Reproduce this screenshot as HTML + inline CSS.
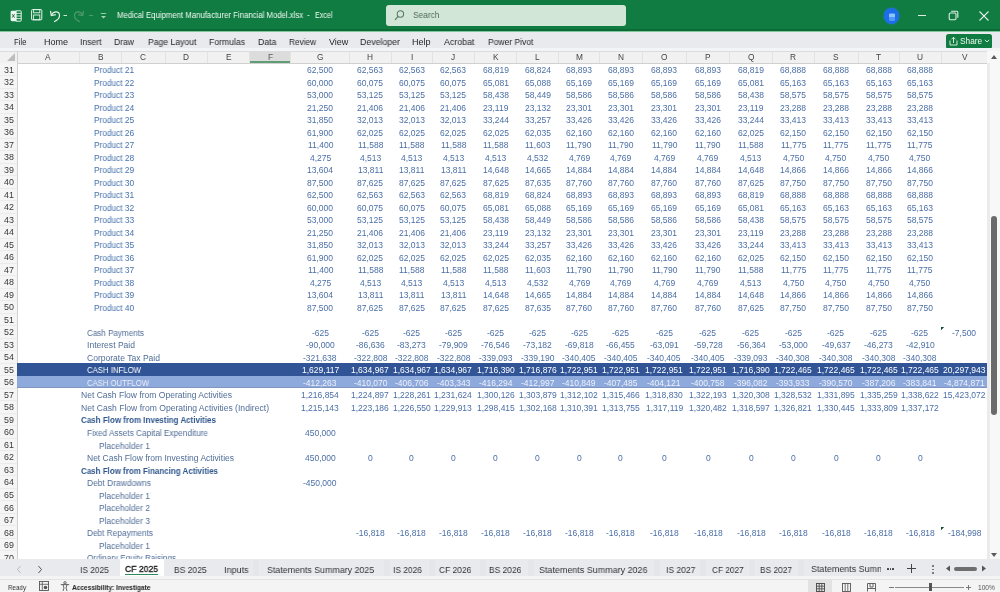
<!DOCTYPE html>
<html><head><meta charset="utf-8"><style>
*{margin:0;padding:0;box-sizing:border-box}
html,body{width:1000px;height:592px;overflow:hidden;background:#fff;font-family:"Liberation Sans",sans-serif}
.a{position:absolute}
.x{position:absolute;white-space:nowrap;will-change:transform}
</style></head><body>

<div id="root" class="a" style="left:0;top:0;width:1000px;height:592px;filter:blur(0.3px)">
<div class="a" style="left:0;top:0;width:1000px;height:31px;background:#107c41"></div>
<div class="a" style="left:0;top:29px;width:1000px;height:1.5px;background:#0c6a37"></div>
<div class="a" style="left:385.5px;top:5px;width:240px;height:20.5px;background:#d2e6d8;border-radius:3px"></div>
<svg class="a" style="left:393px;top:8px" width="12" height="14" viewBox="0 0 12 14"><circle cx="7.4" cy="6" r="3.2" fill="none" stroke="#587c63" stroke-width="1.1"/><line x1="5.1" y1="8.3" x2="2" y2="11.8" stroke="#587c63" stroke-width="1.2"/></svg>
<div class="x" style="left:412.80px;top:10.05px;font-size:9.00px;line-height:10.053px;color:#4d6b57;transform:scaleX(0.9258);transform-origin:0 0;">Search</div>
<div class="x" style="left:117.20px;top:11.12px;font-size:8.60px;line-height:9.606px;color:#f4faf6;transform:scaleX(0.9043);transform-origin:0 0;">Medical Equipment Manufacturer Financial Model.xlsx</div>
<div class="x" style="left:307.00px;top:11.12px;font-size:8.60px;line-height:9.606px;color:#d8ecdf;">-</div>
<div class="x" style="left:315.00px;top:11.12px;font-size:8.60px;line-height:9.606px;color:#f4faf6;transform:scaleX(0.8322);transform-origin:0 0;">Excel</div>
<svg class="a" style="left:10px;top:9.5px" width="12" height="12" viewBox="0 0 12 12">
<rect x="5.6" y="0.8" width="5.6" height="10.4" rx="0.6" fill="none" stroke="#e4f4ea" stroke-width="1"/>
<path d="M5.6 3.4 H11.2 M5.6 6 H11.2 M5.6 8.6 H11.2" stroke="#e4f4ea" stroke-width="0.9"/>
<path d="M2 0.8 H6.6 V11.2 H2 A1.4 1.4 0 0 1 0.6 9.8 V2.2 A1.4 1.4 0 0 1 2 0.8 Z" fill="#e9f7ee"/>
<path d="M2.2 4.2 L4.6 7.6 M4.6 4.2 L2.2 7.6" stroke="#1d5a35" stroke-width="0.9"/>
</svg>
<svg class="a" style="left:31px;top:9.4px" width="11.5" height="11.5" viewBox="0 0 11.5 11.5">
<rect x="0.6" y="0.6" width="10.2" height="10.2" rx="0.8" fill="none" stroke="#e4f4ea" stroke-width="1"/>
<rect x="2.6" y="0.6" width="6.2" height="3.2" fill="none" stroke="#e4f4ea" stroke-width="0.9"/>
<rect x="2.6" y="6" width="6.2" height="4.8" fill="none" stroke="#e4f4ea" stroke-width="0.9"/>
</svg>
<svg class="a" style="left:49px;top:9px" width="20" height="14" viewBox="0 0 20 14">
<path d="M2.5 6 C4 2, 10.5 1.5, 10.5 6.5 C10.5 9.5, 8 11.5, 5 12.8" fill="none" stroke="#e3f1e8" stroke-width="1.2"/>
<path d="M1.5 1.8 L2.3 6.6 L6.8 5.6" fill="none" stroke="#e3f1e8" stroke-width="1.2"/>
<line x1="14.5" y1="6.5" x2="18" y2="6.5" stroke="#cfe5d6" stroke-width="1"/>
</svg>
<svg class="a" style="left:72px;top:9px" width="24" height="14" viewBox="0 0 24 14">
<path d="M10.5 6 C9 2, 2.5 1.5, 2.5 6.5 C2.5 9.5, 5 11.5, 8 12.8" fill="none" stroke="#4f9a6c" stroke-width="1.2"/>
<path d="M11.5 1.8 L10.7 6.6 L6.2 5.6" fill="none" stroke="#4f9a6c" stroke-width="1.2"/>
<line x1="17" y1="6.5" x2="21" y2="6.5" stroke="#4f9a6c" stroke-width="1"/>
</svg>
<svg class="a" style="left:99px;top:11px" width="9" height="10" viewBox="0 0 9 10">
<line x1="1.8" y1="2.5" x2="7.2" y2="2.5" stroke="#a8d3b8" stroke-width="0.9"/>
<path d="M2 5 L4.5 7.6 L7 5 Z" fill="#a8d3b8"/>
</svg>
<div class="a" style="left:883.8px;top:8px;width:15.5px;height:15.5px;border-radius:50%;background:#1c6ee8;box-shadow:0 0 2px #2a7ae8"></div>
<div class="a" style="left:888.5px;top:12.5px;width:6.5px;height:8.5px;border-radius:1.5px;background:#4f9af5"></div>
<div class="a" style="left:889px;top:13.5px;width:5.5px;height:3px;background:#8cc4ff"></div>
<div class="a" style="left:918px;top:15px;width:8px;height:1.1px;background:#dcefe3"></div>
<svg class="a" style="left:948px;top:10px" width="11" height="11" viewBox="0 0 11 11">
<rect x="1.2" y="3" width="6.8" height="6.8" rx="1.2" fill="none" stroke="#dcefe3" stroke-width="1.1"/>
<path d="M3.2 1.2 H8.6 A1.2 1.2 0 0 1 9.8 2.4 V7.8" fill="none" stroke="#dcefe3" stroke-width="1.1"/>
</svg>
<svg class="a" style="left:978px;top:10px" width="12" height="12" viewBox="0 0 12 12">
<path d="M1.5 1.5 L10.5 10.5 M10.5 1.5 L1.5 10.5" stroke="#dcefe3" stroke-width="1.1"/>
</svg>
<div class="a" style="left:0;top:31px;width:1000px;height:1px;background:#7fc79a"></div>
<div class="a" style="left:0;top:32px;width:1000px;height:16px;background:#e8eaee"></div>
<div class="x" style="left:14.00px;top:37.16px;font-size:9.00px;line-height:10.053px;color:#262626;transform:scaleX(0.8550);transform-origin:0 0;">File</div>
<div class="x" style="left:43.60px;top:37.16px;font-size:9.00px;line-height:10.053px;color:#262626;transform:scaleX(0.9997);transform-origin:0 0;">Home</div>
<div class="x" style="left:80.40px;top:37.16px;font-size:9.00px;line-height:10.053px;color:#262626;transform:scaleX(0.9596);transform-origin:0 0;">Insert</div>
<div class="x" style="left:114.40px;top:37.16px;font-size:9.00px;line-height:10.053px;color:#262626;transform:scaleX(0.9523);transform-origin:0 0;">Draw</div>
<div class="x" style="left:147.60px;top:37.16px;font-size:9.00px;line-height:10.053px;color:#262626;transform:scaleX(0.9576);transform-origin:0 0;">Page Layout</div>
<div class="x" style="left:209.00px;top:37.16px;font-size:9.00px;line-height:10.053px;color:#262626;transform:scaleX(0.9598);transform-origin:0 0;">Formulas</div>
<div class="x" style="left:257.60px;top:37.16px;font-size:9.00px;line-height:10.053px;color:#262626;transform:scaleX(0.9679);transform-origin:0 0;">Data</div>
<div class="x" style="left:289.00px;top:37.16px;font-size:9.00px;line-height:10.053px;color:#262626;transform:scaleX(0.9150);transform-origin:0 0;">Review</div>
<div class="x" style="left:329.00px;top:37.16px;font-size:9.00px;line-height:10.053px;color:#262626;transform:scaleX(0.9822);transform-origin:0 0;">View</div>
<div class="x" style="left:360.00px;top:37.16px;font-size:9.00px;line-height:10.053px;color:#262626;transform:scaleX(0.9750);transform-origin:0 0;">Developer</div>
<div class="x" style="left:412.40px;top:37.16px;font-size:9.00px;line-height:10.053px;color:#262626;transform:scaleX(1.0049);transform-origin:0 0;">Help</div>
<div class="x" style="left:443.60px;top:37.16px;font-size:9.00px;line-height:10.053px;color:#262626;transform:scaleX(0.9801);transform-origin:0 0;">Acrobat</div>
<div class="x" style="left:487.60px;top:37.16px;font-size:9.00px;line-height:10.053px;color:#262626;transform:scaleX(0.9454);transform-origin:0 0;">Power Pivot</div>
<div class="a" style="left:946px;top:33.5px;width:46px;height:15px;background:#107c41;border-radius:2.5px"></div>
<svg class="a" style="left:949px;top:36px" width="9" height="10" viewBox="0 0 9 10">
<path d="M1 4.5 V9 H8 V4.5" fill="none" stroke="#e6f3ea" stroke-width="0.9"/>
<path d="M4.5 7 V1.3 M2.5 3.3 L4.5 1.3 L6.5 3.3" fill="none" stroke="#e6f3ea" stroke-width="0.9"/>
</svg>
<div class="x" style="left:959.50px;top:36.99px;font-size:8.30px;line-height:9.271px;color:#f2f8f4;transform:scaleX(0.9933);transform-origin:0 0;">Share</div>
<svg class="a" style="left:984px;top:39px" width="6" height="4" viewBox="0 0 6 4"><path d="M0.8 0.8 L3 3 L5.2 0.8" fill="none" stroke="#e6f3ea" stroke-width="0.9"/></svg>
<div class="a" style="left:0;top:48px;width:1000px;height:3px;background:#f3f4f6"></div>
<div class="a" style="left:0;top:50.8px;width:988px;height:0.8px;background:#dcdcdc"></div>
<div class="a" style="left:0;top:51.6px;width:988px;height:11.4px;background:#f1f1f1"></div>
<div class="a" style="left:0;top:62.5px;width:988px;height:0.8px;background:#d0d0d0"></div>
<svg class="a" style="left:4px;top:52px" width="12" height="10" viewBox="0 0 12 10"><path d="M11 1 L11 9 L3 9 Z" fill="#bdbdbd"/></svg>
<div class="a" style="left:249.3px;top:51.6px;width:41.5px;height:11.4px;background:#dcdcdc"></div>
<div class="a" style="left:249.3px;top:61.4px;width:41.5px;height:2px;background:#5f9e74"></div>
<div class="x" style="left:45.48px;top:52.69px;font-size:8.30px;line-height:9.271px;color:#444444;">A</div>
<div class="a" style="left:78.80px;top:51px;width:0.8px;height:11.5px;background:#e2e2e2"></div>
<div class="x" style="left:97.63px;top:52.69px;font-size:8.30px;line-height:9.271px;color:#444444;">B</div>
<div class="a" style="left:121.20px;top:51px;width:0.8px;height:11.5px;background:#e2e2e2"></div>
<div class="x" style="left:140.30px;top:52.69px;font-size:8.30px;line-height:9.271px;color:#444444;">C</div>
<div class="a" style="left:164.60px;top:51px;width:0.8px;height:11.5px;background:#e2e2e2"></div>
<div class="x" style="left:183.25px;top:52.69px;font-size:8.30px;line-height:9.271px;color:#444444;">D</div>
<div class="a" style="left:207.10px;top:51px;width:0.8px;height:11.5px;background:#e2e2e2"></div>
<div class="x" style="left:225.63px;top:52.69px;font-size:8.30px;line-height:9.271px;color:#444444;">E</div>
<div class="a" style="left:248.90px;top:51px;width:0.8px;height:11.5px;background:#e2e2e2"></div>
<div class="x" style="left:267.52px;top:52.69px;font-size:8.30px;line-height:9.271px;color:#5a5a5a;">F</div>
<div class="a" style="left:290.40px;top:51px;width:0.8px;height:11.5px;background:#e2e2e2"></div>
<div class="x" style="left:316.97px;top:52.69px;font-size:8.30px;line-height:9.271px;color:#444444;">G</div>
<div class="a" style="left:349.20px;top:51px;width:0.8px;height:11.5px;background:#e2e2e2"></div>
<div class="x" style="left:367.30px;top:52.69px;font-size:8.30px;line-height:9.271px;color:#444444;">H</div>
<div class="a" style="left:390.60px;top:51px;width:0.8px;height:11.5px;background:#e2e2e2"></div>
<div class="x" style="left:410.60px;top:52.69px;font-size:8.30px;line-height:9.271px;color:#444444;">I</div>
<div class="a" style="left:432.10px;top:51px;width:0.8px;height:11.5px;background:#e2e2e2"></div>
<div class="x" style="left:451.32px;top:52.69px;font-size:8.30px;line-height:9.271px;color:#444444;">J</div>
<div class="a" style="left:473.90px;top:51px;width:0.8px;height:11.5px;background:#e2e2e2"></div>
<div class="x" style="left:492.78px;top:52.69px;font-size:8.30px;line-height:9.271px;color:#444444;">K</div>
<div class="a" style="left:516.40px;top:51px;width:0.8px;height:11.5px;background:#e2e2e2"></div>
<div class="x" style="left:535.49px;top:52.69px;font-size:8.30px;line-height:9.271px;color:#444444;">L</div>
<div class="a" style="left:558.40px;top:51px;width:0.8px;height:11.5px;background:#e2e2e2"></div>
<div class="x" style="left:575.69px;top:52.69px;font-size:8.30px;line-height:9.271px;color:#444444;">M</div>
<div class="a" style="left:599.10px;top:51px;width:0.8px;height:11.5px;background:#e2e2e2"></div>
<div class="x" style="left:617.75px;top:52.69px;font-size:8.30px;line-height:9.271px;color:#444444;">N</div>
<div class="a" style="left:641.60px;top:51px;width:0.8px;height:11.5px;background:#e2e2e2"></div>
<div class="x" style="left:661.02px;top:52.69px;font-size:8.30px;line-height:9.271px;color:#444444;">O</div>
<div class="a" style="left:686.10px;top:51px;width:0.8px;height:11.5px;background:#e2e2e2"></div>
<div class="x" style="left:705.23px;top:52.69px;font-size:8.30px;line-height:9.271px;color:#444444;">P</div>
<div class="a" style="left:729.10px;top:51px;width:0.8px;height:11.5px;background:#e2e2e2"></div>
<div class="x" style="left:747.72px;top:52.69px;font-size:8.30px;line-height:9.271px;color:#444444;">Q</div>
<div class="a" style="left:772.00px;top:51px;width:0.8px;height:11.5px;background:#e2e2e2"></div>
<div class="x" style="left:790.20px;top:52.69px;font-size:8.30px;line-height:9.271px;color:#444444;">R</div>
<div class="a" style="left:813.60px;top:51px;width:0.8px;height:11.5px;background:#e2e2e2"></div>
<div class="x" style="left:833.23px;top:52.69px;font-size:8.30px;line-height:9.271px;color:#444444;">S</div>
<div class="a" style="left:857.60px;top:51px;width:0.8px;height:11.5px;background:#e2e2e2"></div>
<div class="x" style="left:875.97px;top:52.69px;font-size:8.30px;line-height:9.271px;color:#444444;">T</div>
<div class="a" style="left:898.60px;top:51px;width:0.8px;height:11.5px;background:#e2e2e2"></div>
<div class="x" style="left:917.00px;top:52.69px;font-size:8.30px;line-height:9.271px;color:#444444;">U</div>
<div class="a" style="left:940.60px;top:51px;width:0.8px;height:11.5px;background:#e2e2e2"></div>
<div class="x" style="left:961.73px;top:52.69px;font-size:8.30px;line-height:9.271px;color:#444444;">V</div>
<div class="a" style="left:987.60px;top:51px;width:0.8px;height:11.5px;background:#e2e2e2"></div>
<div class="a" style="left:16.9px;top:51px;width:0.8px;height:508px;background:#d0d0d0"></div>
<div class="a" style="left:0;top:63.3px;width:16.9px;height:496px;background:#f5f5f5"></div>
<div class="x" style="left:4.45px;top:65.65px;font-size:8.90px;line-height:9.941px;color:#383838;">31</div>
<div class="a" style="left:0;top:75.06px;width:16.9px;height:0.7px;background:#ebebeb"></div>
<div class="x" style="left:4.45px;top:78.16px;font-size:8.90px;line-height:9.941px;color:#383838;">32</div>
<div class="a" style="left:0;top:87.57px;width:16.9px;height:0.7px;background:#ebebeb"></div>
<div class="x" style="left:4.45px;top:90.67px;font-size:8.90px;line-height:9.941px;color:#383838;">33</div>
<div class="a" style="left:0;top:100.08px;width:16.9px;height:0.7px;background:#ebebeb"></div>
<div class="x" style="left:4.45px;top:103.18px;font-size:8.90px;line-height:9.941px;color:#383838;">34</div>
<div class="a" style="left:0;top:112.59px;width:16.9px;height:0.7px;background:#ebebeb"></div>
<div class="x" style="left:4.45px;top:115.69px;font-size:8.90px;line-height:9.941px;color:#383838;">35</div>
<div class="a" style="left:0;top:125.10px;width:16.9px;height:0.7px;background:#ebebeb"></div>
<div class="x" style="left:4.45px;top:128.20px;font-size:8.90px;line-height:9.941px;color:#383838;">36</div>
<div class="a" style="left:0;top:137.61px;width:16.9px;height:0.7px;background:#ebebeb"></div>
<div class="x" style="left:4.45px;top:140.71px;font-size:8.90px;line-height:9.941px;color:#383838;">37</div>
<div class="a" style="left:0;top:150.12px;width:16.9px;height:0.7px;background:#ebebeb"></div>
<div class="x" style="left:4.45px;top:153.22px;font-size:8.90px;line-height:9.941px;color:#383838;">38</div>
<div class="a" style="left:0;top:162.63px;width:16.9px;height:0.7px;background:#ebebeb"></div>
<div class="x" style="left:4.45px;top:165.73px;font-size:8.90px;line-height:9.941px;color:#383838;">39</div>
<div class="a" style="left:0;top:175.14px;width:16.9px;height:0.7px;background:#ebebeb"></div>
<div class="x" style="left:4.45px;top:178.24px;font-size:8.90px;line-height:9.941px;color:#383838;">40</div>
<div class="a" style="left:0;top:187.65px;width:16.9px;height:0.7px;background:#ebebeb"></div>
<div class="x" style="left:4.45px;top:190.75px;font-size:8.90px;line-height:9.941px;color:#383838;">41</div>
<div class="a" style="left:0;top:200.16px;width:16.9px;height:0.7px;background:#ebebeb"></div>
<div class="x" style="left:4.45px;top:203.26px;font-size:8.90px;line-height:9.941px;color:#383838;">42</div>
<div class="a" style="left:0;top:212.67px;width:16.9px;height:0.7px;background:#ebebeb"></div>
<div class="x" style="left:4.45px;top:215.77px;font-size:8.90px;line-height:9.941px;color:#383838;">43</div>
<div class="a" style="left:0;top:225.18px;width:16.9px;height:0.7px;background:#ebebeb"></div>
<div class="x" style="left:4.45px;top:228.28px;font-size:8.90px;line-height:9.941px;color:#383838;">44</div>
<div class="a" style="left:0;top:237.69px;width:16.9px;height:0.7px;background:#ebebeb"></div>
<div class="x" style="left:4.45px;top:240.79px;font-size:8.90px;line-height:9.941px;color:#383838;">45</div>
<div class="a" style="left:0;top:250.20px;width:16.9px;height:0.7px;background:#ebebeb"></div>
<div class="x" style="left:4.45px;top:253.30px;font-size:8.90px;line-height:9.941px;color:#383838;">46</div>
<div class="a" style="left:0;top:262.71px;width:16.9px;height:0.7px;background:#ebebeb"></div>
<div class="x" style="left:4.45px;top:265.81px;font-size:8.90px;line-height:9.941px;color:#383838;">47</div>
<div class="a" style="left:0;top:275.22px;width:16.9px;height:0.7px;background:#ebebeb"></div>
<div class="x" style="left:4.45px;top:278.32px;font-size:8.90px;line-height:9.941px;color:#383838;">48</div>
<div class="a" style="left:0;top:287.73px;width:16.9px;height:0.7px;background:#ebebeb"></div>
<div class="x" style="left:4.45px;top:290.83px;font-size:8.90px;line-height:9.941px;color:#383838;">49</div>
<div class="a" style="left:0;top:300.24px;width:16.9px;height:0.7px;background:#ebebeb"></div>
<div class="x" style="left:4.45px;top:303.34px;font-size:8.90px;line-height:9.941px;color:#383838;">50</div>
<div class="a" style="left:0;top:312.75px;width:16.9px;height:0.7px;background:#ebebeb"></div>
<div class="x" style="left:4.45px;top:315.85px;font-size:8.90px;line-height:9.941px;color:#383838;">51</div>
<div class="a" style="left:0;top:325.26px;width:16.9px;height:0.7px;background:#ebebeb"></div>
<div class="x" style="left:4.45px;top:328.36px;font-size:8.90px;line-height:9.941px;color:#383838;">52</div>
<div class="a" style="left:0;top:337.77px;width:16.9px;height:0.7px;background:#ebebeb"></div>
<div class="x" style="left:4.45px;top:340.87px;font-size:8.90px;line-height:9.941px;color:#383838;">53</div>
<div class="a" style="left:0;top:350.28px;width:16.9px;height:0.7px;background:#ebebeb"></div>
<div class="x" style="left:4.45px;top:353.38px;font-size:8.90px;line-height:9.941px;color:#383838;">54</div>
<div class="a" style="left:0;top:362.79px;width:16.9px;height:0.7px;background:#ebebeb"></div>
<div class="x" style="left:4.45px;top:365.89px;font-size:8.90px;line-height:9.941px;color:#383838;">55</div>
<div class="a" style="left:0;top:375.30px;width:16.9px;height:0.7px;background:#ebebeb"></div>
<div class="x" style="left:4.45px;top:378.40px;font-size:8.90px;line-height:9.941px;color:#383838;">56</div>
<div class="a" style="left:0;top:387.81px;width:16.9px;height:0.7px;background:#ebebeb"></div>
<div class="x" style="left:4.45px;top:390.91px;font-size:8.90px;line-height:9.941px;color:#383838;">57</div>
<div class="a" style="left:0;top:400.32px;width:16.9px;height:0.7px;background:#ebebeb"></div>
<div class="x" style="left:4.45px;top:403.42px;font-size:8.90px;line-height:9.941px;color:#383838;">58</div>
<div class="a" style="left:0;top:412.83px;width:16.9px;height:0.7px;background:#ebebeb"></div>
<div class="x" style="left:4.45px;top:415.93px;font-size:8.90px;line-height:9.941px;color:#383838;">59</div>
<div class="a" style="left:0;top:425.34px;width:16.9px;height:0.7px;background:#ebebeb"></div>
<div class="x" style="left:4.45px;top:428.44px;font-size:8.90px;line-height:9.941px;color:#383838;">60</div>
<div class="a" style="left:0;top:437.85px;width:16.9px;height:0.7px;background:#ebebeb"></div>
<div class="x" style="left:4.45px;top:440.95px;font-size:8.90px;line-height:9.941px;color:#383838;">61</div>
<div class="a" style="left:0;top:450.36px;width:16.9px;height:0.7px;background:#ebebeb"></div>
<div class="x" style="left:4.45px;top:453.46px;font-size:8.90px;line-height:9.941px;color:#383838;">62</div>
<div class="a" style="left:0;top:462.87px;width:16.9px;height:0.7px;background:#ebebeb"></div>
<div class="x" style="left:4.45px;top:465.97px;font-size:8.90px;line-height:9.941px;color:#383838;">63</div>
<div class="a" style="left:0;top:475.38px;width:16.9px;height:0.7px;background:#ebebeb"></div>
<div class="x" style="left:4.45px;top:478.48px;font-size:8.90px;line-height:9.941px;color:#383838;">64</div>
<div class="a" style="left:0;top:487.89px;width:16.9px;height:0.7px;background:#ebebeb"></div>
<div class="x" style="left:4.45px;top:490.99px;font-size:8.90px;line-height:9.941px;color:#383838;">65</div>
<div class="a" style="left:0;top:500.40px;width:16.9px;height:0.7px;background:#ebebeb"></div>
<div class="x" style="left:4.45px;top:503.50px;font-size:8.90px;line-height:9.941px;color:#383838;">66</div>
<div class="a" style="left:0;top:512.91px;width:16.9px;height:0.7px;background:#ebebeb"></div>
<div class="x" style="left:4.45px;top:516.01px;font-size:8.90px;line-height:9.941px;color:#383838;">67</div>
<div class="a" style="left:0;top:525.42px;width:16.9px;height:0.7px;background:#ebebeb"></div>
<div class="x" style="left:4.45px;top:528.52px;font-size:8.90px;line-height:9.941px;color:#383838;">68</div>
<div class="a" style="left:0;top:537.93px;width:16.9px;height:0.7px;background:#ebebeb"></div>
<div class="x" style="left:4.45px;top:541.03px;font-size:8.90px;line-height:9.941px;color:#383838;">69</div>
<div class="a" style="left:0;top:550.44px;width:16.9px;height:0.7px;background:#ebebeb"></div>
<div class="x" style="left:4.45px;top:553.54px;font-size:8.90px;line-height:9.941px;color:#383838;">70</div>
<div class="a" style="left:0;top:562.95px;width:16.9px;height:0.7px;background:#ebebeb"></div>
<div class="x" style="left:93.60px;top:66.21px;font-size:8.50px;line-height:9.495px;color:#4470ab;transform:scaleX(0.9730);transform-origin:0 0;">Product 21</div>
<div class="x" style="left:307.20px;top:66.21px;font-size:8.50px;line-height:9.495px;color:#4b6fa6;">62,500</div>
<div class="x" style="left:357.30px;top:66.21px;font-size:8.50px;line-height:9.495px;color:#4b6fa6;">62,563</div>
<div class="x" style="left:398.75px;top:66.21px;font-size:8.50px;line-height:9.495px;color:#4b6fa6;">62,563</div>
<div class="x" style="left:440.40px;top:66.21px;font-size:8.50px;line-height:9.495px;color:#4b6fa6;">62,563</div>
<div class="x" style="left:482.55px;top:66.21px;font-size:8.50px;line-height:9.495px;color:#4b6fa6;">68,819</div>
<div class="x" style="left:524.80px;top:66.21px;font-size:8.50px;line-height:9.495px;color:#4b6fa6;">68,824</div>
<div class="x" style="left:566.15px;top:66.21px;font-size:8.50px;line-height:9.495px;color:#4b6fa6;">68,893</div>
<div class="x" style="left:607.75px;top:66.21px;font-size:8.50px;line-height:9.495px;color:#4b6fa6;">68,893</div>
<div class="x" style="left:651.25px;top:66.21px;font-size:8.50px;line-height:9.495px;color:#4b6fa6;">68,893</div>
<div class="x" style="left:695.00px;top:66.21px;font-size:8.50px;line-height:9.495px;color:#4b6fa6;">68,893</div>
<div class="x" style="left:737.95px;top:66.21px;font-size:8.50px;line-height:9.495px;color:#4b6fa6;">68,819</div>
<div class="x" style="left:780.20px;top:66.21px;font-size:8.50px;line-height:9.495px;color:#4b6fa6;">68,888</div>
<div class="x" style="left:823.00px;top:66.21px;font-size:8.50px;line-height:9.495px;color:#4b6fa6;">68,888</div>
<div class="x" style="left:865.50px;top:66.21px;font-size:8.50px;line-height:9.495px;color:#4b6fa6;">68,888</div>
<div class="x" style="left:907.00px;top:66.21px;font-size:8.50px;line-height:9.495px;color:#4b6fa6;">68,888</div>
<div class="x" style="left:93.60px;top:78.72px;font-size:8.50px;line-height:9.495px;color:#4470ab;transform:scaleX(0.9730);transform-origin:0 0;">Product 22</div>
<div class="x" style="left:307.20px;top:78.72px;font-size:8.50px;line-height:9.495px;color:#4b6fa6;">60,000</div>
<div class="x" style="left:357.30px;top:78.72px;font-size:8.50px;line-height:9.495px;color:#4b6fa6;">60,075</div>
<div class="x" style="left:398.75px;top:78.72px;font-size:8.50px;line-height:9.495px;color:#4b6fa6;">60,075</div>
<div class="x" style="left:440.40px;top:78.72px;font-size:8.50px;line-height:9.495px;color:#4b6fa6;">60,075</div>
<div class="x" style="left:482.55px;top:78.72px;font-size:8.50px;line-height:9.495px;color:#4b6fa6;">65,081</div>
<div class="x" style="left:524.80px;top:78.72px;font-size:8.50px;line-height:9.495px;color:#4b6fa6;">65,088</div>
<div class="x" style="left:566.15px;top:78.72px;font-size:8.50px;line-height:9.495px;color:#4b6fa6;">65,169</div>
<div class="x" style="left:607.75px;top:78.72px;font-size:8.50px;line-height:9.495px;color:#4b6fa6;">65,169</div>
<div class="x" style="left:651.25px;top:78.72px;font-size:8.50px;line-height:9.495px;color:#4b6fa6;">65,169</div>
<div class="x" style="left:695.00px;top:78.72px;font-size:8.50px;line-height:9.495px;color:#4b6fa6;">65,169</div>
<div class="x" style="left:737.95px;top:78.72px;font-size:8.50px;line-height:9.495px;color:#4b6fa6;">65,081</div>
<div class="x" style="left:780.20px;top:78.72px;font-size:8.50px;line-height:9.495px;color:#4b6fa6;">65,163</div>
<div class="x" style="left:823.00px;top:78.72px;font-size:8.50px;line-height:9.495px;color:#4b6fa6;">65,163</div>
<div class="x" style="left:865.50px;top:78.72px;font-size:8.50px;line-height:9.495px;color:#4b6fa6;">65,163</div>
<div class="x" style="left:907.00px;top:78.72px;font-size:8.50px;line-height:9.495px;color:#4b6fa6;">65,163</div>
<div class="x" style="left:93.60px;top:91.23px;font-size:8.50px;line-height:9.495px;color:#4470ab;transform:scaleX(0.9730);transform-origin:0 0;">Product 23</div>
<div class="x" style="left:307.20px;top:91.23px;font-size:8.50px;line-height:9.495px;color:#4b6fa6;">53,000</div>
<div class="x" style="left:357.30px;top:91.23px;font-size:8.50px;line-height:9.495px;color:#4b6fa6;">53,125</div>
<div class="x" style="left:398.75px;top:91.23px;font-size:8.50px;line-height:9.495px;color:#4b6fa6;">53,125</div>
<div class="x" style="left:440.40px;top:91.23px;font-size:8.50px;line-height:9.495px;color:#4b6fa6;">53,125</div>
<div class="x" style="left:482.55px;top:91.23px;font-size:8.50px;line-height:9.495px;color:#4b6fa6;">58,438</div>
<div class="x" style="left:524.80px;top:91.23px;font-size:8.50px;line-height:9.495px;color:#4b6fa6;">58,449</div>
<div class="x" style="left:566.15px;top:91.23px;font-size:8.50px;line-height:9.495px;color:#4b6fa6;">58,586</div>
<div class="x" style="left:607.75px;top:91.23px;font-size:8.50px;line-height:9.495px;color:#4b6fa6;">58,586</div>
<div class="x" style="left:651.25px;top:91.23px;font-size:8.50px;line-height:9.495px;color:#4b6fa6;">58,586</div>
<div class="x" style="left:695.00px;top:91.23px;font-size:8.50px;line-height:9.495px;color:#4b6fa6;">58,586</div>
<div class="x" style="left:737.95px;top:91.23px;font-size:8.50px;line-height:9.495px;color:#4b6fa6;">58,438</div>
<div class="x" style="left:780.20px;top:91.23px;font-size:8.50px;line-height:9.495px;color:#4b6fa6;">58,575</div>
<div class="x" style="left:823.00px;top:91.23px;font-size:8.50px;line-height:9.495px;color:#4b6fa6;">58,575</div>
<div class="x" style="left:865.50px;top:91.23px;font-size:8.50px;line-height:9.495px;color:#4b6fa6;">58,575</div>
<div class="x" style="left:907.00px;top:91.23px;font-size:8.50px;line-height:9.495px;color:#4b6fa6;">58,575</div>
<div class="x" style="left:93.60px;top:103.74px;font-size:8.50px;line-height:9.495px;color:#4470ab;transform:scaleX(0.9730);transform-origin:0 0;">Product 24</div>
<div class="x" style="left:307.20px;top:103.74px;font-size:8.50px;line-height:9.495px;color:#4b6fa6;">21,250</div>
<div class="x" style="left:357.30px;top:103.74px;font-size:8.50px;line-height:9.495px;color:#4b6fa6;">21,406</div>
<div class="x" style="left:398.75px;top:103.74px;font-size:8.50px;line-height:9.495px;color:#4b6fa6;">21,406</div>
<div class="x" style="left:440.40px;top:103.74px;font-size:8.50px;line-height:9.495px;color:#4b6fa6;">21,406</div>
<div class="x" style="left:482.87px;top:103.74px;font-size:8.50px;line-height:9.495px;color:#4b6fa6;">23,119</div>
<div class="x" style="left:524.80px;top:103.74px;font-size:8.50px;line-height:9.495px;color:#4b6fa6;">23,132</div>
<div class="x" style="left:566.15px;top:103.74px;font-size:8.50px;line-height:9.495px;color:#4b6fa6;">23,301</div>
<div class="x" style="left:607.75px;top:103.74px;font-size:8.50px;line-height:9.495px;color:#4b6fa6;">23,301</div>
<div class="x" style="left:651.25px;top:103.74px;font-size:8.50px;line-height:9.495px;color:#4b6fa6;">23,301</div>
<div class="x" style="left:695.00px;top:103.74px;font-size:8.50px;line-height:9.495px;color:#4b6fa6;">23,301</div>
<div class="x" style="left:738.27px;top:103.74px;font-size:8.50px;line-height:9.495px;color:#4b6fa6;">23,119</div>
<div class="x" style="left:780.20px;top:103.74px;font-size:8.50px;line-height:9.495px;color:#4b6fa6;">23,288</div>
<div class="x" style="left:823.00px;top:103.74px;font-size:8.50px;line-height:9.495px;color:#4b6fa6;">23,288</div>
<div class="x" style="left:865.50px;top:103.74px;font-size:8.50px;line-height:9.495px;color:#4b6fa6;">23,288</div>
<div class="x" style="left:907.00px;top:103.74px;font-size:8.50px;line-height:9.495px;color:#4b6fa6;">23,288</div>
<div class="x" style="left:93.60px;top:116.25px;font-size:8.50px;line-height:9.495px;color:#4470ab;transform:scaleX(0.9730);transform-origin:0 0;">Product 25</div>
<div class="x" style="left:307.20px;top:116.25px;font-size:8.50px;line-height:9.495px;color:#4b6fa6;">31,850</div>
<div class="x" style="left:357.30px;top:116.25px;font-size:8.50px;line-height:9.495px;color:#4b6fa6;">32,013</div>
<div class="x" style="left:398.75px;top:116.25px;font-size:8.50px;line-height:9.495px;color:#4b6fa6;">32,013</div>
<div class="x" style="left:440.40px;top:116.25px;font-size:8.50px;line-height:9.495px;color:#4b6fa6;">32,013</div>
<div class="x" style="left:482.55px;top:116.25px;font-size:8.50px;line-height:9.495px;color:#4b6fa6;">33,244</div>
<div class="x" style="left:524.80px;top:116.25px;font-size:8.50px;line-height:9.495px;color:#4b6fa6;">33,257</div>
<div class="x" style="left:566.15px;top:116.25px;font-size:8.50px;line-height:9.495px;color:#4b6fa6;">33,426</div>
<div class="x" style="left:607.75px;top:116.25px;font-size:8.50px;line-height:9.495px;color:#4b6fa6;">33,426</div>
<div class="x" style="left:651.25px;top:116.25px;font-size:8.50px;line-height:9.495px;color:#4b6fa6;">33,426</div>
<div class="x" style="left:695.00px;top:116.25px;font-size:8.50px;line-height:9.495px;color:#4b6fa6;">33,426</div>
<div class="x" style="left:737.95px;top:116.25px;font-size:8.50px;line-height:9.495px;color:#4b6fa6;">33,244</div>
<div class="x" style="left:780.20px;top:116.25px;font-size:8.50px;line-height:9.495px;color:#4b6fa6;">33,413</div>
<div class="x" style="left:823.00px;top:116.25px;font-size:8.50px;line-height:9.495px;color:#4b6fa6;">33,413</div>
<div class="x" style="left:865.50px;top:116.25px;font-size:8.50px;line-height:9.495px;color:#4b6fa6;">33,413</div>
<div class="x" style="left:907.00px;top:116.25px;font-size:8.50px;line-height:9.495px;color:#4b6fa6;">33,413</div>
<div class="x" style="left:93.60px;top:128.76px;font-size:8.50px;line-height:9.495px;color:#4470ab;transform:scaleX(0.9730);transform-origin:0 0;">Product 26</div>
<div class="x" style="left:307.20px;top:128.76px;font-size:8.50px;line-height:9.495px;color:#4b6fa6;">61,900</div>
<div class="x" style="left:357.30px;top:128.76px;font-size:8.50px;line-height:9.495px;color:#4b6fa6;">62,025</div>
<div class="x" style="left:398.75px;top:128.76px;font-size:8.50px;line-height:9.495px;color:#4b6fa6;">62,025</div>
<div class="x" style="left:440.40px;top:128.76px;font-size:8.50px;line-height:9.495px;color:#4b6fa6;">62,025</div>
<div class="x" style="left:482.55px;top:128.76px;font-size:8.50px;line-height:9.495px;color:#4b6fa6;">62,025</div>
<div class="x" style="left:524.80px;top:128.76px;font-size:8.50px;line-height:9.495px;color:#4b6fa6;">62,035</div>
<div class="x" style="left:566.15px;top:128.76px;font-size:8.50px;line-height:9.495px;color:#4b6fa6;">62,160</div>
<div class="x" style="left:607.75px;top:128.76px;font-size:8.50px;line-height:9.495px;color:#4b6fa6;">62,160</div>
<div class="x" style="left:651.25px;top:128.76px;font-size:8.50px;line-height:9.495px;color:#4b6fa6;">62,160</div>
<div class="x" style="left:695.00px;top:128.76px;font-size:8.50px;line-height:9.495px;color:#4b6fa6;">62,160</div>
<div class="x" style="left:737.95px;top:128.76px;font-size:8.50px;line-height:9.495px;color:#4b6fa6;">62,025</div>
<div class="x" style="left:780.20px;top:128.76px;font-size:8.50px;line-height:9.495px;color:#4b6fa6;">62,150</div>
<div class="x" style="left:823.00px;top:128.76px;font-size:8.50px;line-height:9.495px;color:#4b6fa6;">62,150</div>
<div class="x" style="left:865.50px;top:128.76px;font-size:8.50px;line-height:9.495px;color:#4b6fa6;">62,150</div>
<div class="x" style="left:907.00px;top:128.76px;font-size:8.50px;line-height:9.495px;color:#4b6fa6;">62,150</div>
<div class="x" style="left:93.60px;top:141.27px;font-size:8.50px;line-height:9.495px;color:#4470ab;transform:scaleX(0.9730);transform-origin:0 0;">Product 27</div>
<div class="x" style="left:307.52px;top:141.27px;font-size:8.50px;line-height:9.495px;color:#4b6fa6;">11,400</div>
<div class="x" style="left:357.62px;top:141.27px;font-size:8.50px;line-height:9.495px;color:#4b6fa6;">11,588</div>
<div class="x" style="left:399.07px;top:141.27px;font-size:8.50px;line-height:9.495px;color:#4b6fa6;">11,588</div>
<div class="x" style="left:440.72px;top:141.27px;font-size:8.50px;line-height:9.495px;color:#4b6fa6;">11,588</div>
<div class="x" style="left:482.87px;top:141.27px;font-size:8.50px;line-height:9.495px;color:#4b6fa6;">11,588</div>
<div class="x" style="left:525.12px;top:141.27px;font-size:8.50px;line-height:9.495px;color:#4b6fa6;">11,603</div>
<div class="x" style="left:566.47px;top:141.27px;font-size:8.50px;line-height:9.495px;color:#4b6fa6;">11,790</div>
<div class="x" style="left:608.07px;top:141.27px;font-size:8.50px;line-height:9.495px;color:#4b6fa6;">11,790</div>
<div class="x" style="left:651.57px;top:141.27px;font-size:8.50px;line-height:9.495px;color:#4b6fa6;">11,790</div>
<div class="x" style="left:695.32px;top:141.27px;font-size:8.50px;line-height:9.495px;color:#4b6fa6;">11,790</div>
<div class="x" style="left:738.27px;top:141.27px;font-size:8.50px;line-height:9.495px;color:#4b6fa6;">11,588</div>
<div class="x" style="left:780.52px;top:141.27px;font-size:8.50px;line-height:9.495px;color:#4b6fa6;">11,775</div>
<div class="x" style="left:823.32px;top:141.27px;font-size:8.50px;line-height:9.495px;color:#4b6fa6;">11,775</div>
<div class="x" style="left:865.82px;top:141.27px;font-size:8.50px;line-height:9.495px;color:#4b6fa6;">11,775</div>
<div class="x" style="left:907.32px;top:141.27px;font-size:8.50px;line-height:9.495px;color:#4b6fa6;">11,775</div>
<div class="x" style="left:93.60px;top:153.78px;font-size:8.50px;line-height:9.495px;color:#4470ab;transform:scaleX(0.9730);transform-origin:0 0;">Product 28</div>
<div class="x" style="left:309.56px;top:153.78px;font-size:8.50px;line-height:9.495px;color:#4b6fa6;">4,275</div>
<div class="x" style="left:359.66px;top:153.78px;font-size:8.50px;line-height:9.495px;color:#4b6fa6;">4,513</div>
<div class="x" style="left:401.11px;top:153.78px;font-size:8.50px;line-height:9.495px;color:#4b6fa6;">4,513</div>
<div class="x" style="left:442.76px;top:153.78px;font-size:8.50px;line-height:9.495px;color:#4b6fa6;">4,513</div>
<div class="x" style="left:484.91px;top:153.78px;font-size:8.50px;line-height:9.495px;color:#4b6fa6;">4,513</div>
<div class="x" style="left:527.16px;top:153.78px;font-size:8.50px;line-height:9.495px;color:#4b6fa6;">4,532</div>
<div class="x" style="left:568.51px;top:153.78px;font-size:8.50px;line-height:9.495px;color:#4b6fa6;">4,769</div>
<div class="x" style="left:610.11px;top:153.78px;font-size:8.50px;line-height:9.495px;color:#4b6fa6;">4,769</div>
<div class="x" style="left:653.61px;top:153.78px;font-size:8.50px;line-height:9.495px;color:#4b6fa6;">4,769</div>
<div class="x" style="left:697.36px;top:153.78px;font-size:8.50px;line-height:9.495px;color:#4b6fa6;">4,769</div>
<div class="x" style="left:740.31px;top:153.78px;font-size:8.50px;line-height:9.495px;color:#4b6fa6;">4,513</div>
<div class="x" style="left:782.56px;top:153.78px;font-size:8.50px;line-height:9.495px;color:#4b6fa6;">4,750</div>
<div class="x" style="left:825.36px;top:153.78px;font-size:8.50px;line-height:9.495px;color:#4b6fa6;">4,750</div>
<div class="x" style="left:867.86px;top:153.78px;font-size:8.50px;line-height:9.495px;color:#4b6fa6;">4,750</div>
<div class="x" style="left:909.36px;top:153.78px;font-size:8.50px;line-height:9.495px;color:#4b6fa6;">4,750</div>
<div class="x" style="left:93.60px;top:166.29px;font-size:8.50px;line-height:9.495px;color:#4470ab;transform:scaleX(0.9730);transform-origin:0 0;">Product 29</div>
<div class="x" style="left:307.20px;top:166.29px;font-size:8.50px;line-height:9.495px;color:#4b6fa6;">13,604</div>
<div class="x" style="left:357.62px;top:166.29px;font-size:8.50px;line-height:9.495px;color:#4b6fa6;">13,811</div>
<div class="x" style="left:399.07px;top:166.29px;font-size:8.50px;line-height:9.495px;color:#4b6fa6;">13,811</div>
<div class="x" style="left:440.72px;top:166.29px;font-size:8.50px;line-height:9.495px;color:#4b6fa6;">13,811</div>
<div class="x" style="left:482.55px;top:166.29px;font-size:8.50px;line-height:9.495px;color:#4b6fa6;">14,648</div>
<div class="x" style="left:524.80px;top:166.29px;font-size:8.50px;line-height:9.495px;color:#4b6fa6;">14,665</div>
<div class="x" style="left:566.15px;top:166.29px;font-size:8.50px;line-height:9.495px;color:#4b6fa6;">14,884</div>
<div class="x" style="left:607.75px;top:166.29px;font-size:8.50px;line-height:9.495px;color:#4b6fa6;">14,884</div>
<div class="x" style="left:651.25px;top:166.29px;font-size:8.50px;line-height:9.495px;color:#4b6fa6;">14,884</div>
<div class="x" style="left:695.00px;top:166.29px;font-size:8.50px;line-height:9.495px;color:#4b6fa6;">14,884</div>
<div class="x" style="left:737.95px;top:166.29px;font-size:8.50px;line-height:9.495px;color:#4b6fa6;">14,648</div>
<div class="x" style="left:780.20px;top:166.29px;font-size:8.50px;line-height:9.495px;color:#4b6fa6;">14,866</div>
<div class="x" style="left:823.00px;top:166.29px;font-size:8.50px;line-height:9.495px;color:#4b6fa6;">14,866</div>
<div class="x" style="left:865.50px;top:166.29px;font-size:8.50px;line-height:9.495px;color:#4b6fa6;">14,866</div>
<div class="x" style="left:907.00px;top:166.29px;font-size:8.50px;line-height:9.495px;color:#4b6fa6;">14,866</div>
<div class="x" style="left:93.60px;top:178.80px;font-size:8.50px;line-height:9.495px;color:#4470ab;transform:scaleX(0.9730);transform-origin:0 0;">Product 30</div>
<div class="x" style="left:307.20px;top:178.80px;font-size:8.50px;line-height:9.495px;color:#4b6fa6;">87,500</div>
<div class="x" style="left:357.30px;top:178.80px;font-size:8.50px;line-height:9.495px;color:#4b6fa6;">87,625</div>
<div class="x" style="left:398.75px;top:178.80px;font-size:8.50px;line-height:9.495px;color:#4b6fa6;">87,625</div>
<div class="x" style="left:440.40px;top:178.80px;font-size:8.50px;line-height:9.495px;color:#4b6fa6;">87,625</div>
<div class="x" style="left:482.55px;top:178.80px;font-size:8.50px;line-height:9.495px;color:#4b6fa6;">87,625</div>
<div class="x" style="left:524.80px;top:178.80px;font-size:8.50px;line-height:9.495px;color:#4b6fa6;">87,635</div>
<div class="x" style="left:566.15px;top:178.80px;font-size:8.50px;line-height:9.495px;color:#4b6fa6;">87,760</div>
<div class="x" style="left:607.75px;top:178.80px;font-size:8.50px;line-height:9.495px;color:#4b6fa6;">87,760</div>
<div class="x" style="left:651.25px;top:178.80px;font-size:8.50px;line-height:9.495px;color:#4b6fa6;">87,760</div>
<div class="x" style="left:695.00px;top:178.80px;font-size:8.50px;line-height:9.495px;color:#4b6fa6;">87,760</div>
<div class="x" style="left:737.95px;top:178.80px;font-size:8.50px;line-height:9.495px;color:#4b6fa6;">87,625</div>
<div class="x" style="left:780.20px;top:178.80px;font-size:8.50px;line-height:9.495px;color:#4b6fa6;">87,750</div>
<div class="x" style="left:823.00px;top:178.80px;font-size:8.50px;line-height:9.495px;color:#4b6fa6;">87,750</div>
<div class="x" style="left:865.50px;top:178.80px;font-size:8.50px;line-height:9.495px;color:#4b6fa6;">87,750</div>
<div class="x" style="left:907.00px;top:178.80px;font-size:8.50px;line-height:9.495px;color:#4b6fa6;">87,750</div>
<div class="x" style="left:93.60px;top:191.31px;font-size:8.50px;line-height:9.495px;color:#4470ab;transform:scaleX(0.9730);transform-origin:0 0;">Product 31</div>
<div class="x" style="left:307.20px;top:191.31px;font-size:8.50px;line-height:9.495px;color:#4b6fa6;">62,500</div>
<div class="x" style="left:357.30px;top:191.31px;font-size:8.50px;line-height:9.495px;color:#4b6fa6;">62,563</div>
<div class="x" style="left:398.75px;top:191.31px;font-size:8.50px;line-height:9.495px;color:#4b6fa6;">62,563</div>
<div class="x" style="left:440.40px;top:191.31px;font-size:8.50px;line-height:9.495px;color:#4b6fa6;">62,563</div>
<div class="x" style="left:482.55px;top:191.31px;font-size:8.50px;line-height:9.495px;color:#4b6fa6;">68,819</div>
<div class="x" style="left:524.80px;top:191.31px;font-size:8.50px;line-height:9.495px;color:#4b6fa6;">68,824</div>
<div class="x" style="left:566.15px;top:191.31px;font-size:8.50px;line-height:9.495px;color:#4b6fa6;">68,893</div>
<div class="x" style="left:607.75px;top:191.31px;font-size:8.50px;line-height:9.495px;color:#4b6fa6;">68,893</div>
<div class="x" style="left:651.25px;top:191.31px;font-size:8.50px;line-height:9.495px;color:#4b6fa6;">68,893</div>
<div class="x" style="left:695.00px;top:191.31px;font-size:8.50px;line-height:9.495px;color:#4b6fa6;">68,893</div>
<div class="x" style="left:737.95px;top:191.31px;font-size:8.50px;line-height:9.495px;color:#4b6fa6;">68,819</div>
<div class="x" style="left:780.20px;top:191.31px;font-size:8.50px;line-height:9.495px;color:#4b6fa6;">68,888</div>
<div class="x" style="left:823.00px;top:191.31px;font-size:8.50px;line-height:9.495px;color:#4b6fa6;">68,888</div>
<div class="x" style="left:865.50px;top:191.31px;font-size:8.50px;line-height:9.495px;color:#4b6fa6;">68,888</div>
<div class="x" style="left:907.00px;top:191.31px;font-size:8.50px;line-height:9.495px;color:#4b6fa6;">68,888</div>
<div class="x" style="left:93.60px;top:203.82px;font-size:8.50px;line-height:9.495px;color:#4470ab;transform:scaleX(0.9730);transform-origin:0 0;">Product 32</div>
<div class="x" style="left:307.20px;top:203.82px;font-size:8.50px;line-height:9.495px;color:#4b6fa6;">60,000</div>
<div class="x" style="left:357.30px;top:203.82px;font-size:8.50px;line-height:9.495px;color:#4b6fa6;">60,075</div>
<div class="x" style="left:398.75px;top:203.82px;font-size:8.50px;line-height:9.495px;color:#4b6fa6;">60,075</div>
<div class="x" style="left:440.40px;top:203.82px;font-size:8.50px;line-height:9.495px;color:#4b6fa6;">60,075</div>
<div class="x" style="left:482.55px;top:203.82px;font-size:8.50px;line-height:9.495px;color:#4b6fa6;">65,081</div>
<div class="x" style="left:524.80px;top:203.82px;font-size:8.50px;line-height:9.495px;color:#4b6fa6;">65,088</div>
<div class="x" style="left:566.15px;top:203.82px;font-size:8.50px;line-height:9.495px;color:#4b6fa6;">65,169</div>
<div class="x" style="left:607.75px;top:203.82px;font-size:8.50px;line-height:9.495px;color:#4b6fa6;">65,169</div>
<div class="x" style="left:651.25px;top:203.82px;font-size:8.50px;line-height:9.495px;color:#4b6fa6;">65,169</div>
<div class="x" style="left:695.00px;top:203.82px;font-size:8.50px;line-height:9.495px;color:#4b6fa6;">65,169</div>
<div class="x" style="left:737.95px;top:203.82px;font-size:8.50px;line-height:9.495px;color:#4b6fa6;">65,081</div>
<div class="x" style="left:780.20px;top:203.82px;font-size:8.50px;line-height:9.495px;color:#4b6fa6;">65,163</div>
<div class="x" style="left:823.00px;top:203.82px;font-size:8.50px;line-height:9.495px;color:#4b6fa6;">65,163</div>
<div class="x" style="left:865.50px;top:203.82px;font-size:8.50px;line-height:9.495px;color:#4b6fa6;">65,163</div>
<div class="x" style="left:907.00px;top:203.82px;font-size:8.50px;line-height:9.495px;color:#4b6fa6;">65,163</div>
<div class="x" style="left:93.60px;top:216.33px;font-size:8.50px;line-height:9.495px;color:#4470ab;transform:scaleX(0.9730);transform-origin:0 0;">Product 33</div>
<div class="x" style="left:307.20px;top:216.33px;font-size:8.50px;line-height:9.495px;color:#4b6fa6;">53,000</div>
<div class="x" style="left:357.30px;top:216.33px;font-size:8.50px;line-height:9.495px;color:#4b6fa6;">53,125</div>
<div class="x" style="left:398.75px;top:216.33px;font-size:8.50px;line-height:9.495px;color:#4b6fa6;">53,125</div>
<div class="x" style="left:440.40px;top:216.33px;font-size:8.50px;line-height:9.495px;color:#4b6fa6;">53,125</div>
<div class="x" style="left:482.55px;top:216.33px;font-size:8.50px;line-height:9.495px;color:#4b6fa6;">58,438</div>
<div class="x" style="left:524.80px;top:216.33px;font-size:8.50px;line-height:9.495px;color:#4b6fa6;">58,449</div>
<div class="x" style="left:566.15px;top:216.33px;font-size:8.50px;line-height:9.495px;color:#4b6fa6;">58,586</div>
<div class="x" style="left:607.75px;top:216.33px;font-size:8.50px;line-height:9.495px;color:#4b6fa6;">58,586</div>
<div class="x" style="left:651.25px;top:216.33px;font-size:8.50px;line-height:9.495px;color:#4b6fa6;">58,586</div>
<div class="x" style="left:695.00px;top:216.33px;font-size:8.50px;line-height:9.495px;color:#4b6fa6;">58,586</div>
<div class="x" style="left:737.95px;top:216.33px;font-size:8.50px;line-height:9.495px;color:#4b6fa6;">58,438</div>
<div class="x" style="left:780.20px;top:216.33px;font-size:8.50px;line-height:9.495px;color:#4b6fa6;">58,575</div>
<div class="x" style="left:823.00px;top:216.33px;font-size:8.50px;line-height:9.495px;color:#4b6fa6;">58,575</div>
<div class="x" style="left:865.50px;top:216.33px;font-size:8.50px;line-height:9.495px;color:#4b6fa6;">58,575</div>
<div class="x" style="left:907.00px;top:216.33px;font-size:8.50px;line-height:9.495px;color:#4b6fa6;">58,575</div>
<div class="x" style="left:93.60px;top:228.84px;font-size:8.50px;line-height:9.495px;color:#4470ab;transform:scaleX(0.9730);transform-origin:0 0;">Product 34</div>
<div class="x" style="left:307.20px;top:228.84px;font-size:8.50px;line-height:9.495px;color:#4b6fa6;">21,250</div>
<div class="x" style="left:357.30px;top:228.84px;font-size:8.50px;line-height:9.495px;color:#4b6fa6;">21,406</div>
<div class="x" style="left:398.75px;top:228.84px;font-size:8.50px;line-height:9.495px;color:#4b6fa6;">21,406</div>
<div class="x" style="left:440.40px;top:228.84px;font-size:8.50px;line-height:9.495px;color:#4b6fa6;">21,406</div>
<div class="x" style="left:482.87px;top:228.84px;font-size:8.50px;line-height:9.495px;color:#4b6fa6;">23,119</div>
<div class="x" style="left:524.80px;top:228.84px;font-size:8.50px;line-height:9.495px;color:#4b6fa6;">23,132</div>
<div class="x" style="left:566.15px;top:228.84px;font-size:8.50px;line-height:9.495px;color:#4b6fa6;">23,301</div>
<div class="x" style="left:607.75px;top:228.84px;font-size:8.50px;line-height:9.495px;color:#4b6fa6;">23,301</div>
<div class="x" style="left:651.25px;top:228.84px;font-size:8.50px;line-height:9.495px;color:#4b6fa6;">23,301</div>
<div class="x" style="left:695.00px;top:228.84px;font-size:8.50px;line-height:9.495px;color:#4b6fa6;">23,301</div>
<div class="x" style="left:738.27px;top:228.84px;font-size:8.50px;line-height:9.495px;color:#4b6fa6;">23,119</div>
<div class="x" style="left:780.20px;top:228.84px;font-size:8.50px;line-height:9.495px;color:#4b6fa6;">23,288</div>
<div class="x" style="left:823.00px;top:228.84px;font-size:8.50px;line-height:9.495px;color:#4b6fa6;">23,288</div>
<div class="x" style="left:865.50px;top:228.84px;font-size:8.50px;line-height:9.495px;color:#4b6fa6;">23,288</div>
<div class="x" style="left:907.00px;top:228.84px;font-size:8.50px;line-height:9.495px;color:#4b6fa6;">23,288</div>
<div class="x" style="left:93.60px;top:241.35px;font-size:8.50px;line-height:9.495px;color:#4470ab;transform:scaleX(0.9730);transform-origin:0 0;">Product 35</div>
<div class="x" style="left:307.20px;top:241.35px;font-size:8.50px;line-height:9.495px;color:#4b6fa6;">31,850</div>
<div class="x" style="left:357.30px;top:241.35px;font-size:8.50px;line-height:9.495px;color:#4b6fa6;">32,013</div>
<div class="x" style="left:398.75px;top:241.35px;font-size:8.50px;line-height:9.495px;color:#4b6fa6;">32,013</div>
<div class="x" style="left:440.40px;top:241.35px;font-size:8.50px;line-height:9.495px;color:#4b6fa6;">32,013</div>
<div class="x" style="left:482.55px;top:241.35px;font-size:8.50px;line-height:9.495px;color:#4b6fa6;">33,244</div>
<div class="x" style="left:524.80px;top:241.35px;font-size:8.50px;line-height:9.495px;color:#4b6fa6;">33,257</div>
<div class="x" style="left:566.15px;top:241.35px;font-size:8.50px;line-height:9.495px;color:#4b6fa6;">33,426</div>
<div class="x" style="left:607.75px;top:241.35px;font-size:8.50px;line-height:9.495px;color:#4b6fa6;">33,426</div>
<div class="x" style="left:651.25px;top:241.35px;font-size:8.50px;line-height:9.495px;color:#4b6fa6;">33,426</div>
<div class="x" style="left:695.00px;top:241.35px;font-size:8.50px;line-height:9.495px;color:#4b6fa6;">33,426</div>
<div class="x" style="left:737.95px;top:241.35px;font-size:8.50px;line-height:9.495px;color:#4b6fa6;">33,244</div>
<div class="x" style="left:780.20px;top:241.35px;font-size:8.50px;line-height:9.495px;color:#4b6fa6;">33,413</div>
<div class="x" style="left:823.00px;top:241.35px;font-size:8.50px;line-height:9.495px;color:#4b6fa6;">33,413</div>
<div class="x" style="left:865.50px;top:241.35px;font-size:8.50px;line-height:9.495px;color:#4b6fa6;">33,413</div>
<div class="x" style="left:907.00px;top:241.35px;font-size:8.50px;line-height:9.495px;color:#4b6fa6;">33,413</div>
<div class="x" style="left:93.60px;top:253.86px;font-size:8.50px;line-height:9.495px;color:#4470ab;transform:scaleX(0.9730);transform-origin:0 0;">Product 36</div>
<div class="x" style="left:307.20px;top:253.86px;font-size:8.50px;line-height:9.495px;color:#4b6fa6;">61,900</div>
<div class="x" style="left:357.30px;top:253.86px;font-size:8.50px;line-height:9.495px;color:#4b6fa6;">62,025</div>
<div class="x" style="left:398.75px;top:253.86px;font-size:8.50px;line-height:9.495px;color:#4b6fa6;">62,025</div>
<div class="x" style="left:440.40px;top:253.86px;font-size:8.50px;line-height:9.495px;color:#4b6fa6;">62,025</div>
<div class="x" style="left:482.55px;top:253.86px;font-size:8.50px;line-height:9.495px;color:#4b6fa6;">62,025</div>
<div class="x" style="left:524.80px;top:253.86px;font-size:8.50px;line-height:9.495px;color:#4b6fa6;">62,035</div>
<div class="x" style="left:566.15px;top:253.86px;font-size:8.50px;line-height:9.495px;color:#4b6fa6;">62,160</div>
<div class="x" style="left:607.75px;top:253.86px;font-size:8.50px;line-height:9.495px;color:#4b6fa6;">62,160</div>
<div class="x" style="left:651.25px;top:253.86px;font-size:8.50px;line-height:9.495px;color:#4b6fa6;">62,160</div>
<div class="x" style="left:695.00px;top:253.86px;font-size:8.50px;line-height:9.495px;color:#4b6fa6;">62,160</div>
<div class="x" style="left:737.95px;top:253.86px;font-size:8.50px;line-height:9.495px;color:#4b6fa6;">62,025</div>
<div class="x" style="left:780.20px;top:253.86px;font-size:8.50px;line-height:9.495px;color:#4b6fa6;">62,150</div>
<div class="x" style="left:823.00px;top:253.86px;font-size:8.50px;line-height:9.495px;color:#4b6fa6;">62,150</div>
<div class="x" style="left:865.50px;top:253.86px;font-size:8.50px;line-height:9.495px;color:#4b6fa6;">62,150</div>
<div class="x" style="left:907.00px;top:253.86px;font-size:8.50px;line-height:9.495px;color:#4b6fa6;">62,150</div>
<div class="x" style="left:93.60px;top:266.37px;font-size:8.50px;line-height:9.495px;color:#4470ab;transform:scaleX(0.9730);transform-origin:0 0;">Product 37</div>
<div class="x" style="left:307.52px;top:266.37px;font-size:8.50px;line-height:9.495px;color:#4b6fa6;">11,400</div>
<div class="x" style="left:357.62px;top:266.37px;font-size:8.50px;line-height:9.495px;color:#4b6fa6;">11,588</div>
<div class="x" style="left:399.07px;top:266.37px;font-size:8.50px;line-height:9.495px;color:#4b6fa6;">11,588</div>
<div class="x" style="left:440.72px;top:266.37px;font-size:8.50px;line-height:9.495px;color:#4b6fa6;">11,588</div>
<div class="x" style="left:482.87px;top:266.37px;font-size:8.50px;line-height:9.495px;color:#4b6fa6;">11,588</div>
<div class="x" style="left:525.12px;top:266.37px;font-size:8.50px;line-height:9.495px;color:#4b6fa6;">11,603</div>
<div class="x" style="left:566.47px;top:266.37px;font-size:8.50px;line-height:9.495px;color:#4b6fa6;">11,790</div>
<div class="x" style="left:608.07px;top:266.37px;font-size:8.50px;line-height:9.495px;color:#4b6fa6;">11,790</div>
<div class="x" style="left:651.57px;top:266.37px;font-size:8.50px;line-height:9.495px;color:#4b6fa6;">11,790</div>
<div class="x" style="left:695.32px;top:266.37px;font-size:8.50px;line-height:9.495px;color:#4b6fa6;">11,790</div>
<div class="x" style="left:738.27px;top:266.37px;font-size:8.50px;line-height:9.495px;color:#4b6fa6;">11,588</div>
<div class="x" style="left:780.52px;top:266.37px;font-size:8.50px;line-height:9.495px;color:#4b6fa6;">11,775</div>
<div class="x" style="left:823.32px;top:266.37px;font-size:8.50px;line-height:9.495px;color:#4b6fa6;">11,775</div>
<div class="x" style="left:865.82px;top:266.37px;font-size:8.50px;line-height:9.495px;color:#4b6fa6;">11,775</div>
<div class="x" style="left:907.32px;top:266.37px;font-size:8.50px;line-height:9.495px;color:#4b6fa6;">11,775</div>
<div class="x" style="left:93.60px;top:278.88px;font-size:8.50px;line-height:9.495px;color:#4470ab;transform:scaleX(0.9730);transform-origin:0 0;">Product 38</div>
<div class="x" style="left:309.56px;top:278.88px;font-size:8.50px;line-height:9.495px;color:#4b6fa6;">4,275</div>
<div class="x" style="left:359.66px;top:278.88px;font-size:8.50px;line-height:9.495px;color:#4b6fa6;">4,513</div>
<div class="x" style="left:401.11px;top:278.88px;font-size:8.50px;line-height:9.495px;color:#4b6fa6;">4,513</div>
<div class="x" style="left:442.76px;top:278.88px;font-size:8.50px;line-height:9.495px;color:#4b6fa6;">4,513</div>
<div class="x" style="left:484.91px;top:278.88px;font-size:8.50px;line-height:9.495px;color:#4b6fa6;">4,513</div>
<div class="x" style="left:527.16px;top:278.88px;font-size:8.50px;line-height:9.495px;color:#4b6fa6;">4,532</div>
<div class="x" style="left:568.51px;top:278.88px;font-size:8.50px;line-height:9.495px;color:#4b6fa6;">4,769</div>
<div class="x" style="left:610.11px;top:278.88px;font-size:8.50px;line-height:9.495px;color:#4b6fa6;">4,769</div>
<div class="x" style="left:653.61px;top:278.88px;font-size:8.50px;line-height:9.495px;color:#4b6fa6;">4,769</div>
<div class="x" style="left:697.36px;top:278.88px;font-size:8.50px;line-height:9.495px;color:#4b6fa6;">4,769</div>
<div class="x" style="left:740.31px;top:278.88px;font-size:8.50px;line-height:9.495px;color:#4b6fa6;">4,513</div>
<div class="x" style="left:782.56px;top:278.88px;font-size:8.50px;line-height:9.495px;color:#4b6fa6;">4,750</div>
<div class="x" style="left:825.36px;top:278.88px;font-size:8.50px;line-height:9.495px;color:#4b6fa6;">4,750</div>
<div class="x" style="left:867.86px;top:278.88px;font-size:8.50px;line-height:9.495px;color:#4b6fa6;">4,750</div>
<div class="x" style="left:909.36px;top:278.88px;font-size:8.50px;line-height:9.495px;color:#4b6fa6;">4,750</div>
<div class="x" style="left:93.60px;top:291.39px;font-size:8.50px;line-height:9.495px;color:#4470ab;transform:scaleX(0.9730);transform-origin:0 0;">Product 39</div>
<div class="x" style="left:307.20px;top:291.39px;font-size:8.50px;line-height:9.495px;color:#4b6fa6;">13,604</div>
<div class="x" style="left:357.62px;top:291.39px;font-size:8.50px;line-height:9.495px;color:#4b6fa6;">13,811</div>
<div class="x" style="left:399.07px;top:291.39px;font-size:8.50px;line-height:9.495px;color:#4b6fa6;">13,811</div>
<div class="x" style="left:440.72px;top:291.39px;font-size:8.50px;line-height:9.495px;color:#4b6fa6;">13,811</div>
<div class="x" style="left:482.55px;top:291.39px;font-size:8.50px;line-height:9.495px;color:#4b6fa6;">14,648</div>
<div class="x" style="left:524.80px;top:291.39px;font-size:8.50px;line-height:9.495px;color:#4b6fa6;">14,665</div>
<div class="x" style="left:566.15px;top:291.39px;font-size:8.50px;line-height:9.495px;color:#4b6fa6;">14,884</div>
<div class="x" style="left:607.75px;top:291.39px;font-size:8.50px;line-height:9.495px;color:#4b6fa6;">14,884</div>
<div class="x" style="left:651.25px;top:291.39px;font-size:8.50px;line-height:9.495px;color:#4b6fa6;">14,884</div>
<div class="x" style="left:695.00px;top:291.39px;font-size:8.50px;line-height:9.495px;color:#4b6fa6;">14,884</div>
<div class="x" style="left:737.95px;top:291.39px;font-size:8.50px;line-height:9.495px;color:#4b6fa6;">14,648</div>
<div class="x" style="left:780.20px;top:291.39px;font-size:8.50px;line-height:9.495px;color:#4b6fa6;">14,866</div>
<div class="x" style="left:823.00px;top:291.39px;font-size:8.50px;line-height:9.495px;color:#4b6fa6;">14,866</div>
<div class="x" style="left:865.50px;top:291.39px;font-size:8.50px;line-height:9.495px;color:#4b6fa6;">14,866</div>
<div class="x" style="left:907.00px;top:291.39px;font-size:8.50px;line-height:9.495px;color:#4b6fa6;">14,866</div>
<div class="x" style="left:93.60px;top:303.90px;font-size:8.50px;line-height:9.495px;color:#4470ab;transform:scaleX(0.9730);transform-origin:0 0;">Product 40</div>
<div class="x" style="left:307.20px;top:303.90px;font-size:8.50px;line-height:9.495px;color:#4b6fa6;">87,500</div>
<div class="x" style="left:357.30px;top:303.90px;font-size:8.50px;line-height:9.495px;color:#4b6fa6;">87,625</div>
<div class="x" style="left:398.75px;top:303.90px;font-size:8.50px;line-height:9.495px;color:#4b6fa6;">87,625</div>
<div class="x" style="left:440.40px;top:303.90px;font-size:8.50px;line-height:9.495px;color:#4b6fa6;">87,625</div>
<div class="x" style="left:482.55px;top:303.90px;font-size:8.50px;line-height:9.495px;color:#4b6fa6;">87,625</div>
<div class="x" style="left:524.80px;top:303.90px;font-size:8.50px;line-height:9.495px;color:#4b6fa6;">87,635</div>
<div class="x" style="left:566.15px;top:303.90px;font-size:8.50px;line-height:9.495px;color:#4b6fa6;">87,760</div>
<div class="x" style="left:607.75px;top:303.90px;font-size:8.50px;line-height:9.495px;color:#4b6fa6;">87,760</div>
<div class="x" style="left:651.25px;top:303.90px;font-size:8.50px;line-height:9.495px;color:#4b6fa6;">87,760</div>
<div class="x" style="left:695.00px;top:303.90px;font-size:8.50px;line-height:9.495px;color:#4b6fa6;">87,760</div>
<div class="x" style="left:737.95px;top:303.90px;font-size:8.50px;line-height:9.495px;color:#4b6fa6;">87,625</div>
<div class="x" style="left:780.20px;top:303.90px;font-size:8.50px;line-height:9.495px;color:#4b6fa6;">87,750</div>
<div class="x" style="left:823.00px;top:303.90px;font-size:8.50px;line-height:9.495px;color:#4b6fa6;">87,750</div>
<div class="x" style="left:865.50px;top:303.90px;font-size:8.50px;line-height:9.495px;color:#4b6fa6;">87,750</div>
<div class="x" style="left:907.00px;top:303.90px;font-size:8.50px;line-height:9.495px;color:#4b6fa6;">87,750</div>
<div class="x" style="left:87.40px;top:328.92px;font-size:8.50px;line-height:9.495px;color:#506d97;transform:scaleX(0.9500);transform-origin:0 0;">Cash Payments</div>
<div class="x" style="left:311.69px;top:328.92px;font-size:8.50px;line-height:9.495px;color:#4b6fa6;">-625</div>
<div class="x" style="left:361.79px;top:328.92px;font-size:8.50px;line-height:9.495px;color:#4b6fa6;">-625</div>
<div class="x" style="left:403.24px;top:328.92px;font-size:8.50px;line-height:9.495px;color:#4b6fa6;">-625</div>
<div class="x" style="left:444.89px;top:328.92px;font-size:8.50px;line-height:9.495px;color:#4b6fa6;">-625</div>
<div class="x" style="left:487.04px;top:328.92px;font-size:8.50px;line-height:9.495px;color:#4b6fa6;">-625</div>
<div class="x" style="left:529.29px;top:328.92px;font-size:8.50px;line-height:9.495px;color:#4b6fa6;">-625</div>
<div class="x" style="left:570.64px;top:328.92px;font-size:8.50px;line-height:9.495px;color:#4b6fa6;">-625</div>
<div class="x" style="left:612.24px;top:328.92px;font-size:8.50px;line-height:9.495px;color:#4b6fa6;">-625</div>
<div class="x" style="left:655.74px;top:328.92px;font-size:8.50px;line-height:9.495px;color:#4b6fa6;">-625</div>
<div class="x" style="left:699.49px;top:328.92px;font-size:8.50px;line-height:9.495px;color:#4b6fa6;">-625</div>
<div class="x" style="left:742.44px;top:328.92px;font-size:8.50px;line-height:9.495px;color:#4b6fa6;">-625</div>
<div class="x" style="left:784.69px;top:328.92px;font-size:8.50px;line-height:9.495px;color:#4b6fa6;">-625</div>
<div class="x" style="left:827.49px;top:328.92px;font-size:8.50px;line-height:9.495px;color:#4b6fa6;">-625</div>
<div class="x" style="left:869.99px;top:328.92px;font-size:8.50px;line-height:9.495px;color:#4b6fa6;">-625</div>
<div class="x" style="left:911.49px;top:328.92px;font-size:8.50px;line-height:9.495px;color:#4b6fa6;">-625</div>
<div class="x" style="left:952.45px;top:328.92px;font-size:8.50px;line-height:9.495px;color:#4b6fa6;">-7,500</div>
<div class="x" style="left:87.40px;top:341.43px;font-size:8.50px;line-height:9.495px;color:#506d97;transform:scaleX(1.0058);transform-origin:0 0;">Interest Paid</div>
<div class="x" style="left:305.79px;top:341.43px;font-size:8.50px;line-height:9.495px;color:#4b6fa6;">-90,000</div>
<div class="x" style="left:355.89px;top:341.43px;font-size:8.50px;line-height:9.495px;color:#4b6fa6;">-86,636</div>
<div class="x" style="left:397.34px;top:341.43px;font-size:8.50px;line-height:9.495px;color:#4b6fa6;">-83,273</div>
<div class="x" style="left:438.99px;top:341.43px;font-size:8.50px;line-height:9.495px;color:#4b6fa6;">-79,909</div>
<div class="x" style="left:481.14px;top:341.43px;font-size:8.50px;line-height:9.495px;color:#4b6fa6;">-76,546</div>
<div class="x" style="left:523.39px;top:341.43px;font-size:8.50px;line-height:9.495px;color:#4b6fa6;">-73,182</div>
<div class="x" style="left:564.74px;top:341.43px;font-size:8.50px;line-height:9.495px;color:#4b6fa6;">-69,818</div>
<div class="x" style="left:606.34px;top:341.43px;font-size:8.50px;line-height:9.495px;color:#4b6fa6;">-66,455</div>
<div class="x" style="left:649.84px;top:341.43px;font-size:8.50px;line-height:9.495px;color:#4b6fa6;">-63,091</div>
<div class="x" style="left:693.59px;top:341.43px;font-size:8.50px;line-height:9.495px;color:#4b6fa6;">-59,728</div>
<div class="x" style="left:736.54px;top:341.43px;font-size:8.50px;line-height:9.495px;color:#4b6fa6;">-56,364</div>
<div class="x" style="left:778.79px;top:341.43px;font-size:8.50px;line-height:9.495px;color:#4b6fa6;">-53,000</div>
<div class="x" style="left:821.59px;top:341.43px;font-size:8.50px;line-height:9.495px;color:#4b6fa6;">-49,637</div>
<div class="x" style="left:864.09px;top:341.43px;font-size:8.50px;line-height:9.495px;color:#4b6fa6;">-46,273</div>
<div class="x" style="left:905.59px;top:341.43px;font-size:8.50px;line-height:9.495px;color:#4b6fa6;">-42,910</div>
<div class="x" style="left:87.40px;top:353.94px;font-size:8.50px;line-height:9.495px;color:#506d97;transform:scaleX(1.0054);transform-origin:0 0;">Corporate Tax Paid</div>
<div class="x" style="left:303.42px;top:353.94px;font-size:8.50px;line-height:9.495px;color:#4b6fa6;">-321,638</div>
<div class="x" style="left:353.52px;top:353.94px;font-size:8.50px;line-height:9.495px;color:#4b6fa6;">-322,808</div>
<div class="x" style="left:394.97px;top:353.94px;font-size:8.50px;line-height:9.495px;color:#4b6fa6;">-322,808</div>
<div class="x" style="left:436.62px;top:353.94px;font-size:8.50px;line-height:9.495px;color:#4b6fa6;">-322,808</div>
<div class="x" style="left:478.77px;top:353.94px;font-size:8.50px;line-height:9.495px;color:#4b6fa6;">-339,093</div>
<div class="x" style="left:521.02px;top:353.94px;font-size:8.50px;line-height:9.495px;color:#4b6fa6;">-339,190</div>
<div class="x" style="left:562.37px;top:353.94px;font-size:8.50px;line-height:9.495px;color:#4b6fa6;">-340,405</div>
<div class="x" style="left:603.97px;top:353.94px;font-size:8.50px;line-height:9.495px;color:#4b6fa6;">-340,405</div>
<div class="x" style="left:647.47px;top:353.94px;font-size:8.50px;line-height:9.495px;color:#4b6fa6;">-340,405</div>
<div class="x" style="left:691.22px;top:353.94px;font-size:8.50px;line-height:9.495px;color:#4b6fa6;">-340,405</div>
<div class="x" style="left:734.17px;top:353.94px;font-size:8.50px;line-height:9.495px;color:#4b6fa6;">-339,093</div>
<div class="x" style="left:776.42px;top:353.94px;font-size:8.50px;line-height:9.495px;color:#4b6fa6;">-340,308</div>
<div class="x" style="left:819.22px;top:353.94px;font-size:8.50px;line-height:9.495px;color:#4b6fa6;">-340,308</div>
<div class="x" style="left:861.72px;top:353.94px;font-size:8.50px;line-height:9.495px;color:#4b6fa6;">-340,308</div>
<div class="x" style="left:903.22px;top:353.94px;font-size:8.50px;line-height:9.495px;color:#4b6fa6;">-340,308</div>
<div class="a" style="left:17.3px;top:363px;width:970.7px;height:12.5px;background:#305496"></div>
<div class="x" style="left:87.40px;top:366.45px;font-size:8.50px;line-height:9.495px;color:#ffffff;transform:scaleX(0.9148);transform-origin:0 0;">CASH INFLOW</div>
<div class="x" style="left:301.61px;top:366.45px;font-size:8.50px;line-height:9.495px;color:#ffffff;">1,629,117</div>
<div class="x" style="left:351.39px;top:366.45px;font-size:8.50px;line-height:9.495px;color:#ffffff;">1,634,967</div>
<div class="x" style="left:392.84px;top:366.45px;font-size:8.50px;line-height:9.495px;color:#ffffff;">1,634,967</div>
<div class="x" style="left:434.49px;top:366.45px;font-size:8.50px;line-height:9.495px;color:#ffffff;">1,634,967</div>
<div class="x" style="left:476.64px;top:366.45px;font-size:8.50px;line-height:9.495px;color:#ffffff;">1,716,390</div>
<div class="x" style="left:518.89px;top:366.45px;font-size:8.50px;line-height:9.495px;color:#ffffff;">1,716,876</div>
<div class="x" style="left:560.24px;top:366.45px;font-size:8.50px;line-height:9.495px;color:#ffffff;">1,722,951</div>
<div class="x" style="left:601.84px;top:366.45px;font-size:8.50px;line-height:9.495px;color:#ffffff;">1,722,951</div>
<div class="x" style="left:645.34px;top:366.45px;font-size:8.50px;line-height:9.495px;color:#ffffff;">1,722,951</div>
<div class="x" style="left:689.09px;top:366.45px;font-size:8.50px;line-height:9.495px;color:#ffffff;">1,722,951</div>
<div class="x" style="left:732.04px;top:366.45px;font-size:8.50px;line-height:9.495px;color:#ffffff;">1,716,390</div>
<div class="x" style="left:774.29px;top:366.45px;font-size:8.50px;line-height:9.495px;color:#ffffff;">1,722,465</div>
<div class="x" style="left:817.09px;top:366.45px;font-size:8.50px;line-height:9.495px;color:#ffffff;">1,722,465</div>
<div class="x" style="left:859.59px;top:366.45px;font-size:8.50px;line-height:9.495px;color:#ffffff;">1,722,465</div>
<div class="x" style="left:901.09px;top:366.45px;font-size:8.50px;line-height:9.495px;color:#ffffff;">1,722,465</div>
<div class="x" style="left:943.23px;top:366.45px;font-size:8.50px;line-height:9.495px;color:#ffffff;">20,297,943</div>
<div class="a" style="left:17.3px;top:375.5px;width:970.7px;height:12.7px;background:#8ea9db"></div>
<div class="a" style="left:17.3px;top:387.2px;width:970.7px;height:1px;background:#8095bd"></div>
<div class="x" style="left:87.40px;top:378.96px;font-size:8.50px;line-height:9.495px;color:#eef2fb;transform:scaleX(0.9055);transform-origin:0 0;">CASH OUTFLOW</div>
<div class="x" style="left:303.42px;top:378.96px;font-size:8.50px;line-height:9.495px;color:#eef2fb;">-412,263</div>
<div class="x" style="left:353.52px;top:378.96px;font-size:8.50px;line-height:9.495px;color:#eef2fb;">-410,070</div>
<div class="x" style="left:394.97px;top:378.96px;font-size:8.50px;line-height:9.495px;color:#eef2fb;">-406,706</div>
<div class="x" style="left:436.62px;top:378.96px;font-size:8.50px;line-height:9.495px;color:#eef2fb;">-403,343</div>
<div class="x" style="left:478.77px;top:378.96px;font-size:8.50px;line-height:9.495px;color:#eef2fb;">-416,294</div>
<div class="x" style="left:521.02px;top:378.96px;font-size:8.50px;line-height:9.495px;color:#eef2fb;">-412,997</div>
<div class="x" style="left:562.37px;top:378.96px;font-size:8.50px;line-height:9.495px;color:#eef2fb;">-410,849</div>
<div class="x" style="left:603.97px;top:378.96px;font-size:8.50px;line-height:9.495px;color:#eef2fb;">-407,485</div>
<div class="x" style="left:647.47px;top:378.96px;font-size:8.50px;line-height:9.495px;color:#eef2fb;">-404,121</div>
<div class="x" style="left:691.22px;top:378.96px;font-size:8.50px;line-height:9.495px;color:#eef2fb;">-400,758</div>
<div class="x" style="left:734.17px;top:378.96px;font-size:8.50px;line-height:9.495px;color:#eef2fb;">-396,082</div>
<div class="x" style="left:776.42px;top:378.96px;font-size:8.50px;line-height:9.495px;color:#eef2fb;">-393,933</div>
<div class="x" style="left:819.22px;top:378.96px;font-size:8.50px;line-height:9.495px;color:#eef2fb;">-390,570</div>
<div class="x" style="left:861.72px;top:378.96px;font-size:8.50px;line-height:9.495px;color:#eef2fb;">-387,206</div>
<div class="x" style="left:903.22px;top:378.96px;font-size:8.50px;line-height:9.495px;color:#eef2fb;">-383,841</div>
<div class="x" style="left:944.18px;top:378.96px;font-size:8.50px;line-height:9.495px;color:#eef2fb;">-4,874,871</div>
<div class="x" style="left:80.60px;top:391.47px;font-size:8.50px;line-height:9.495px;color:#506d97;transform:scaleX(1.0052);transform-origin:0 0;">Net Cash Flow from Operating Activities</div>
<div class="x" style="left:301.29px;top:391.47px;font-size:8.50px;line-height:9.495px;color:#4b6fa6;">1,216,854</div>
<div class="x" style="left:351.39px;top:391.47px;font-size:8.50px;line-height:9.495px;color:#4b6fa6;">1,224,897</div>
<div class="x" style="left:392.84px;top:391.47px;font-size:8.50px;line-height:9.495px;color:#4b6fa6;">1,228,261</div>
<div class="x" style="left:434.49px;top:391.47px;font-size:8.50px;line-height:9.495px;color:#4b6fa6;">1,231,624</div>
<div class="x" style="left:476.64px;top:391.47px;font-size:8.50px;line-height:9.495px;color:#4b6fa6;">1,300,126</div>
<div class="x" style="left:518.89px;top:391.47px;font-size:8.50px;line-height:9.495px;color:#4b6fa6;">1,303,879</div>
<div class="x" style="left:560.24px;top:391.47px;font-size:8.50px;line-height:9.495px;color:#4b6fa6;">1,312,102</div>
<div class="x" style="left:601.84px;top:391.47px;font-size:8.50px;line-height:9.495px;color:#4b6fa6;">1,315,466</div>
<div class="x" style="left:645.34px;top:391.47px;font-size:8.50px;line-height:9.495px;color:#4b6fa6;">1,318,830</div>
<div class="x" style="left:689.09px;top:391.47px;font-size:8.50px;line-height:9.495px;color:#4b6fa6;">1,322,193</div>
<div class="x" style="left:732.04px;top:391.47px;font-size:8.50px;line-height:9.495px;color:#4b6fa6;">1,320,308</div>
<div class="x" style="left:774.29px;top:391.47px;font-size:8.50px;line-height:9.495px;color:#4b6fa6;">1,328,532</div>
<div class="x" style="left:817.09px;top:391.47px;font-size:8.50px;line-height:9.495px;color:#4b6fa6;">1,331,895</div>
<div class="x" style="left:859.59px;top:391.47px;font-size:8.50px;line-height:9.495px;color:#4b6fa6;">1,335,259</div>
<div class="x" style="left:901.09px;top:391.47px;font-size:8.50px;line-height:9.495px;color:#4b6fa6;">1,338,622</div>
<div class="x" style="left:943.23px;top:391.47px;font-size:8.50px;line-height:9.495px;color:#4b6fa6;">15,423,072</div>
<div class="x" style="left:80.60px;top:403.98px;font-size:8.50px;line-height:9.495px;color:#506d97;transform:scaleX(1.0101);transform-origin:0 0;">Net Cash Flow from Operating Activities (Indirect)</div>
<div class="x" style="left:301.29px;top:403.98px;font-size:8.50px;line-height:9.495px;color:#4b6fa6;">1,215,143</div>
<div class="x" style="left:351.39px;top:403.98px;font-size:8.50px;line-height:9.495px;color:#4b6fa6;">1,223,186</div>
<div class="x" style="left:392.84px;top:403.98px;font-size:8.50px;line-height:9.495px;color:#4b6fa6;">1,226,550</div>
<div class="x" style="left:434.49px;top:403.98px;font-size:8.50px;line-height:9.495px;color:#4b6fa6;">1,229,913</div>
<div class="x" style="left:476.64px;top:403.98px;font-size:8.50px;line-height:9.495px;color:#4b6fa6;">1,298,415</div>
<div class="x" style="left:518.89px;top:403.98px;font-size:8.50px;line-height:9.495px;color:#4b6fa6;">1,302,168</div>
<div class="x" style="left:560.24px;top:403.98px;font-size:8.50px;line-height:9.495px;color:#4b6fa6;">1,310,391</div>
<div class="x" style="left:601.84px;top:403.98px;font-size:8.50px;line-height:9.495px;color:#4b6fa6;">1,313,755</div>
<div class="x" style="left:645.66px;top:403.98px;font-size:8.50px;line-height:9.495px;color:#4b6fa6;">1,317,119</div>
<div class="x" style="left:689.09px;top:403.98px;font-size:8.50px;line-height:9.495px;color:#4b6fa6;">1,320,482</div>
<div class="x" style="left:732.04px;top:403.98px;font-size:8.50px;line-height:9.495px;color:#4b6fa6;">1,318,597</div>
<div class="x" style="left:774.29px;top:403.98px;font-size:8.50px;line-height:9.495px;color:#4b6fa6;">1,326,821</div>
<div class="x" style="left:817.09px;top:403.98px;font-size:8.50px;line-height:9.495px;color:#4b6fa6;">1,330,445</div>
<div class="x" style="left:859.59px;top:403.98px;font-size:8.50px;line-height:9.495px;color:#4b6fa6;">1,333,809</div>
<div class="x" style="left:901.09px;top:403.98px;font-size:8.50px;line-height:9.495px;color:#4b6fa6;">1,337,172</div>
<div class="x" style="left:80.60px;top:416.49px;font-size:8.50px;line-height:9.495px;color:#2f568c;font-weight:bold;transform:scaleX(0.9423);transform-origin:0 0;">Cash Flow from Investing Activities</div>
<div class="x" style="left:87.40px;top:429.00px;font-size:8.50px;line-height:9.495px;color:#506d97;transform:scaleX(0.9701);transform-origin:0 0;">Fixed Assets Capital Expenditure</div>
<div class="x" style="left:304.84px;top:429.00px;font-size:8.50px;line-height:9.495px;color:#4b6fa6;">450,000</div>
<div class="x" style="left:99.40px;top:441.51px;font-size:8.50px;line-height:9.495px;color:#506d97;transform:scaleX(0.9812);transform-origin:0 0;">Placeholder 1</div>
<div class="x" style="left:87.40px;top:454.02px;font-size:8.50px;line-height:9.495px;color:#506d97;transform:scaleX(1.0006);transform-origin:0 0;">Net Cash Flow from Investing Activities</div>
<div class="x" style="left:304.84px;top:454.02px;font-size:8.50px;line-height:9.495px;color:#4b6fa6;">450,000</div>
<div class="x" style="left:367.94px;top:454.02px;font-size:8.50px;line-height:9.495px;color:#4b6fa6;">0</div>
<div class="x" style="left:409.39px;top:454.02px;font-size:8.50px;line-height:9.495px;color:#4b6fa6;">0</div>
<div class="x" style="left:451.04px;top:454.02px;font-size:8.50px;line-height:9.495px;color:#4b6fa6;">0</div>
<div class="x" style="left:493.19px;top:454.02px;font-size:8.50px;line-height:9.495px;color:#4b6fa6;">0</div>
<div class="x" style="left:535.44px;top:454.02px;font-size:8.50px;line-height:9.495px;color:#4b6fa6;">0</div>
<div class="x" style="left:576.79px;top:454.02px;font-size:8.50px;line-height:9.495px;color:#4b6fa6;">0</div>
<div class="x" style="left:618.39px;top:454.02px;font-size:8.50px;line-height:9.495px;color:#4b6fa6;">0</div>
<div class="x" style="left:661.89px;top:454.02px;font-size:8.50px;line-height:9.495px;color:#4b6fa6;">0</div>
<div class="x" style="left:705.64px;top:454.02px;font-size:8.50px;line-height:9.495px;color:#4b6fa6;">0</div>
<div class="x" style="left:748.59px;top:454.02px;font-size:8.50px;line-height:9.495px;color:#4b6fa6;">0</div>
<div class="x" style="left:790.84px;top:454.02px;font-size:8.50px;line-height:9.495px;color:#4b6fa6;">0</div>
<div class="x" style="left:833.64px;top:454.02px;font-size:8.50px;line-height:9.495px;color:#4b6fa6;">0</div>
<div class="x" style="left:876.14px;top:454.02px;font-size:8.50px;line-height:9.495px;color:#4b6fa6;">0</div>
<div class="x" style="left:917.64px;top:454.02px;font-size:8.50px;line-height:9.495px;color:#4b6fa6;">0</div>
<div class="x" style="left:80.60px;top:466.53px;font-size:8.50px;line-height:9.495px;color:#2f568c;font-weight:bold;transform:scaleX(0.9377);transform-origin:0 0;">Cash Flow from Financing Activities</div>
<div class="x" style="left:87.40px;top:479.04px;font-size:8.50px;line-height:9.495px;color:#506d97;transform:scaleX(0.9889);transform-origin:0 0;">Debt Drawdowns</div>
<div class="x" style="left:303.42px;top:479.04px;font-size:8.50px;line-height:9.495px;color:#4b6fa6;">-450,000</div>
<div class="x" style="left:99.40px;top:491.55px;font-size:8.50px;line-height:9.495px;color:#506d97;transform:scaleX(0.9812);transform-origin:0 0;">Placeholder 1</div>
<div class="x" style="left:99.40px;top:504.06px;font-size:8.50px;line-height:9.495px;color:#506d97;transform:scaleX(0.9812);transform-origin:0 0;">Placeholder 2</div>
<div class="x" style="left:99.40px;top:516.57px;font-size:8.50px;line-height:9.495px;color:#506d97;transform:scaleX(0.9812);transform-origin:0 0;">Placeholder 3</div>
<div class="x" style="left:87.40px;top:529.08px;font-size:8.50px;line-height:9.495px;color:#506d97;transform:scaleX(0.9701);transform-origin:0 0;">Debt Repayments</div>
<div class="x" style="left:355.89px;top:529.08px;font-size:8.50px;line-height:9.495px;color:#4b6fa6;">-16,818</div>
<div class="x" style="left:397.34px;top:529.08px;font-size:8.50px;line-height:9.495px;color:#4b6fa6;">-16,818</div>
<div class="x" style="left:438.99px;top:529.08px;font-size:8.50px;line-height:9.495px;color:#4b6fa6;">-16,818</div>
<div class="x" style="left:481.14px;top:529.08px;font-size:8.50px;line-height:9.495px;color:#4b6fa6;">-16,818</div>
<div class="x" style="left:523.39px;top:529.08px;font-size:8.50px;line-height:9.495px;color:#4b6fa6;">-16,818</div>
<div class="x" style="left:564.74px;top:529.08px;font-size:8.50px;line-height:9.495px;color:#4b6fa6;">-16,818</div>
<div class="x" style="left:606.34px;top:529.08px;font-size:8.50px;line-height:9.495px;color:#4b6fa6;">-16,818</div>
<div class="x" style="left:649.84px;top:529.08px;font-size:8.50px;line-height:9.495px;color:#4b6fa6;">-16,818</div>
<div class="x" style="left:693.59px;top:529.08px;font-size:8.50px;line-height:9.495px;color:#4b6fa6;">-16,818</div>
<div class="x" style="left:736.54px;top:529.08px;font-size:8.50px;line-height:9.495px;color:#4b6fa6;">-16,818</div>
<div class="x" style="left:778.79px;top:529.08px;font-size:8.50px;line-height:9.495px;color:#4b6fa6;">-16,818</div>
<div class="x" style="left:821.59px;top:529.08px;font-size:8.50px;line-height:9.495px;color:#4b6fa6;">-16,818</div>
<div class="x" style="left:864.09px;top:529.08px;font-size:8.50px;line-height:9.495px;color:#4b6fa6;">-16,818</div>
<div class="x" style="left:905.59px;top:529.08px;font-size:8.50px;line-height:9.495px;color:#4b6fa6;">-16,818</div>
<div class="x" style="left:947.72px;top:529.08px;font-size:8.50px;line-height:9.495px;color:#4b6fa6;">-184,998</div>
<div class="x" style="left:99.40px;top:541.59px;font-size:8.50px;line-height:9.495px;color:#506d97;transform:scaleX(0.9812);transform-origin:0 0;">Placeholder 1</div>
<div class="x" style="left:87.40px;top:554.10px;font-size:8.50px;line-height:9.495px;color:#506d97;transform:scaleX(0.9515);transform-origin:0 0;">Ordinary Equity Raisings</div>
<svg class="a" style="left:941px;top:327.01px" width="4" height="4" viewBox="0 0 4 4"><path d="M0 0 H3.2 L0 3.2 Z" fill="#0f4f26"/></svg>
<svg class="a" style="left:941px;top:527.17px" width="4" height="4" viewBox="0 0 4 4"><path d="M0 0 H3.2 L0 3.2 Z" fill="#0f4f26"/></svg>
<div class="a" style="left:987px;top:50.5px;width:13px;height:508.5px;background:#f8f8f8"></div>
<div class="a" style="left:987px;top:63px;width:3px;height:496px;background:#ebebeb"></div>
<svg class="a" style="left:990px;top:54px" width="8" height="6" viewBox="0 0 8 6"><path d="M1 5 L4 1 L7 5 Z" fill="#5a5a5a"/></svg>
<svg class="a" style="left:990px;top:552px" width="8" height="6" viewBox="0 0 8 6"><path d="M1 1 L4 5 L7 1 Z" fill="#5a5a5a"/></svg>
<div class="a" style="left:990.8px;top:216px;width:6.2px;height:199.4px;background:#6b6b6b;border-radius:3px"></div>
<div class="a" style="left:0;top:559.2px;width:1000px;height:17px;background:#e8eaee"></div>
<svg class="a" style="left:16px;top:564.5px" width="6" height="9" viewBox="0 0 6 9"><path d="M4.5 1 L1.5 4.5 L4.5 8" fill="none" stroke="#b8b8b8" stroke-width="1"/></svg>
<svg class="a" style="left:37px;top:564.5px" width="6" height="9" viewBox="0 0 6 9"><path d="M1.5 1 L4.5 4.5 L1.5 8" fill="none" stroke="#555" stroke-width="1"/></svg>
<div class="a" style="left:120px;top:559px;width:44px;height:18px;background:#ffffff"></div>
<div class="a" style="left:125px;top:574px;width:33px;height:1px;background:#2e8a5a"></div>
<div class="x" style="left:79.60px;top:564.61px;font-size:9.60px;line-height:10.723px;color:#333333;transform:scaleX(0.8703);transform-origin:0 0;">IS 2025</div>
<div class="x" style="left:125.00px;top:563.51px;font-size:9.60px;line-height:10.723px;color:#1a1a1a;transform:scaleX(0.8962);transform-origin:0 0;-webkit-text-stroke:0.35px #1a1a1a;">CF 2025</div>
<div class="x" style="left:174.40px;top:564.61px;font-size:9.60px;line-height:10.723px;color:#333333;transform:scaleX(0.8852);transform-origin:0 0;">BS 2025</div>
<div class="x" style="left:224.40px;top:564.61px;font-size:9.60px;line-height:10.723px;color:#333333;transform:scaleX(0.9407);transform-origin:0 0;">Inputs</div>
<div class="x" style="left:267.40px;top:564.61px;font-size:9.60px;line-height:10.723px;color:#333333;transform:scaleX(0.9216);transform-origin:0 0;">Statements Summary 2025</div>
<div class="x" style="left:393.40px;top:564.61px;font-size:9.60px;line-height:10.723px;color:#333333;transform:scaleX(0.8733);transform-origin:0 0;">IS 2026</div>
<div class="x" style="left:439.00px;top:564.61px;font-size:9.60px;line-height:10.723px;color:#333333;transform:scaleX(0.8772);transform-origin:0 0;">CF 2026</div>
<div class="x" style="left:488.70px;top:564.61px;font-size:9.60px;line-height:10.723px;color:#333333;transform:scaleX(0.8770);transform-origin:0 0;">BS 2026</div>
<div class="x" style="left:539.00px;top:564.61px;font-size:9.60px;line-height:10.723px;color:#333333;transform:scaleX(0.9328);transform-origin:0 0;">Statements Summary 2026</div>
<div class="x" style="left:665.60px;top:564.61px;font-size:9.60px;line-height:10.723px;color:#333333;transform:scaleX(0.8884);transform-origin:0 0;">IS 2027</div>
<div class="x" style="left:711.90px;top:564.61px;font-size:9.60px;line-height:10.723px;color:#333333;transform:scaleX(0.8582);transform-origin:0 0;">CF 2027</div>
<div class="x" style="left:760.30px;top:564.61px;font-size:9.60px;line-height:10.723px;color:#333333;transform:scaleX(0.8689);transform-origin:0 0;">BS 2027</div>
<div class="a" style="left:805px;top:559px;width:76px;height:19px;overflow:hidden"><div class="x" style="left:6.00px;top:5.41px;font-size:9.60px;line-height:10.723px;color:#333333;transform:scaleX(0.9304);transform-origin:0 0;">Statements Summary</div></div>
<div class="a" style="left:252.6px;top:560px;width:6px;height:16px;background:#e4e6ea"></div>
<div class="a" style="left:384.0px;top:560px;width:6px;height:16px;background:#e4e6ea"></div>
<div class="a" style="left:429.0px;top:560px;width:6px;height:16px;background:#e4e6ea"></div>
<div class="a" style="left:479.5px;top:560px;width:6px;height:16px;background:#e4e6ea"></div>
<div class="a" style="left:528.0px;top:560px;width:6px;height:16px;background:#e4e6ea"></div>
<div class="a" style="left:654.0px;top:560px;width:6px;height:16px;background:#e4e6ea"></div>
<div class="a" style="left:700.0px;top:560px;width:6px;height:16px;background:#e4e6ea"></div>
<div class="a" style="left:749.0px;top:560px;width:6px;height:16px;background:#e4e6ea"></div>
<div class="a" style="left:798.0px;top:560px;width:6px;height:16px;background:#e4e6ea"></div>
<div class="a" style="left:887.0px;top:568px;width:1.7px;height:1.7px;background:#333;border-radius:50%"></div>
<div class="a" style="left:889.6px;top:568px;width:1.7px;height:1.7px;background:#333;border-radius:50%"></div>
<div class="a" style="left:892.2px;top:568px;width:1.7px;height:1.7px;background:#333;border-radius:50%"></div>
<div class="a" style="left:906.8px;top:568.3px;width:9px;height:1px;background:#444"></div>
<div class="a" style="left:910.8px;top:564.3px;width:1px;height:9px;background:#444"></div>
<div class="a" style="left:932px;top:565.0px;width:1.5px;height:1.5px;background:#666;border-radius:50%"></div>
<div class="a" style="left:932px;top:568.5px;width:1.5px;height:1.5px;background:#666;border-radius:50%"></div>
<div class="a" style="left:932px;top:572.0px;width:1.5px;height:1.5px;background:#666;border-radius:50%"></div>
<svg class="a" style="left:945px;top:565px" width="6" height="7" viewBox="0 0 6 7"><path d="M5 0.5 L1 3.5 L5 6.5 Z" fill="#555"/></svg>
<div class="a" style="left:953.8px;top:566.8px;width:23.2px;height:4.6px;background:#6e6e6e;border-radius:2.3px"></div>
<svg class="a" style="left:980.5px;top:565px" width="6" height="7" viewBox="0 0 6 7"><path d="M1 0.5 L5 3.5 L1 6.5 Z" fill="#555"/></svg>
<div class="a" style="left:0;top:576.2px;width:1000px;height:15.8px;background:#f4f4f4"></div>
<div class="a" style="left:0;top:579.3px;width:1000px;height:0.8px;background:#e3e3e3"></div>
<div class="x" style="left:7.70px;top:583.70px;font-size:7.40px;line-height:8.266px;color:#333;transform:scaleX(0.8415);transform-origin:0 0;">Ready</div>
<svg class="a" style="left:39px;top:581px" width="10" height="10" viewBox="0 0 10 10">
<rect x="0.5" y="0.5" width="9" height="9" fill="none" stroke="#555" stroke-width="0.9"/>
<line x1="0.5" y1="3.3" x2="9.5" y2="3.3" stroke="#555" stroke-width="0.8"/>
<line x1="3.3" y1="0.5" x2="3.3" y2="9.5" stroke="#555" stroke-width="0.8"/>
<circle cx="6.5" cy="6.5" r="1.8" fill="#555"/>
</svg>
<svg class="a" style="left:60px;top:581px" width="10" height="11" viewBox="0 0 10 11">
<circle cx="5" cy="1.8" r="1.2" fill="none" stroke="#444" stroke-width="0.8"/>
<path d="M0.8 3.6 H9.2 M3 3.6 L4 7 L3 10 M7 3.6 L6 7 L7 10" fill="none" stroke="#444" stroke-width="0.8"/>
</svg>
<div class="x" style="left:72.00px;top:584.06px;font-size:7.00px;line-height:7.819px;color:#222;font-weight:bold;transform:scaleX(0.9373);transform-origin:0 0;">Accessibility: Investigate</div>
<div class="a" style="left:808px;top:580px;width:24px;height:12px;background:#e2e2e2"></div>
<svg class="a" style="left:815.5px;top:582.5px" width="9" height="9" viewBox="0 0 9 9">
<rect x="0.5" y="0.5" width="8" height="8" fill="none" stroke="#444" stroke-width="0.9"/>
<path d="M0.5 3.2 H8.5 M0.5 5.8 H8.5 M3.2 0.5 V8.5 M5.8 0.5 V8.5" stroke="#444" stroke-width="0.8"/>
</svg>
<svg class="a" style="left:842px;top:582.5px" width="9" height="9" viewBox="0 0 9 9">
<rect x="0.5" y="0.5" width="8" height="8" fill="none" stroke="#555" stroke-width="0.9"/>
<path d="M3.2 0.5 V8.5 M5.8 0.5 V8.5" stroke="#555" stroke-width="0.8"/>
</svg>
<svg class="a" style="left:867px;top:582.5px" width="9" height="9" viewBox="0 0 9 9">
<path d="M0.5 8.5 V0.5 H8.5 V8.5 M0.5 5.5 H8.5 M3 0.5 V4 H6 V0.5" fill="none" stroke="#555" stroke-width="0.9"/>
</svg>
<div class="a" style="left:889px;top:586.8px;width:4.5px;height:0.9px;background:#777"></div>
<div class="a" style="left:895px;top:586.8px;width:69px;height:0.8px;background:#8a8a8a"></div>
<div class="a" style="left:928.6px;top:582.6px;width:3px;height:8.4px;background:#555"></div>
<div class="a" style="left:965.5px;top:586.8px;width:5px;height:0.9px;background:#777"></div>
<div class="a" style="left:967.6px;top:584.6px;width:0.9px;height:5px;background:#777"></div>
<div class="x" style="left:978.00px;top:584.33px;font-size:6.60px;line-height:7.372px;color:#555;transform:scaleX(0.9952);transform-origin:0 0;">100%</div>
</div>
</body></html>
